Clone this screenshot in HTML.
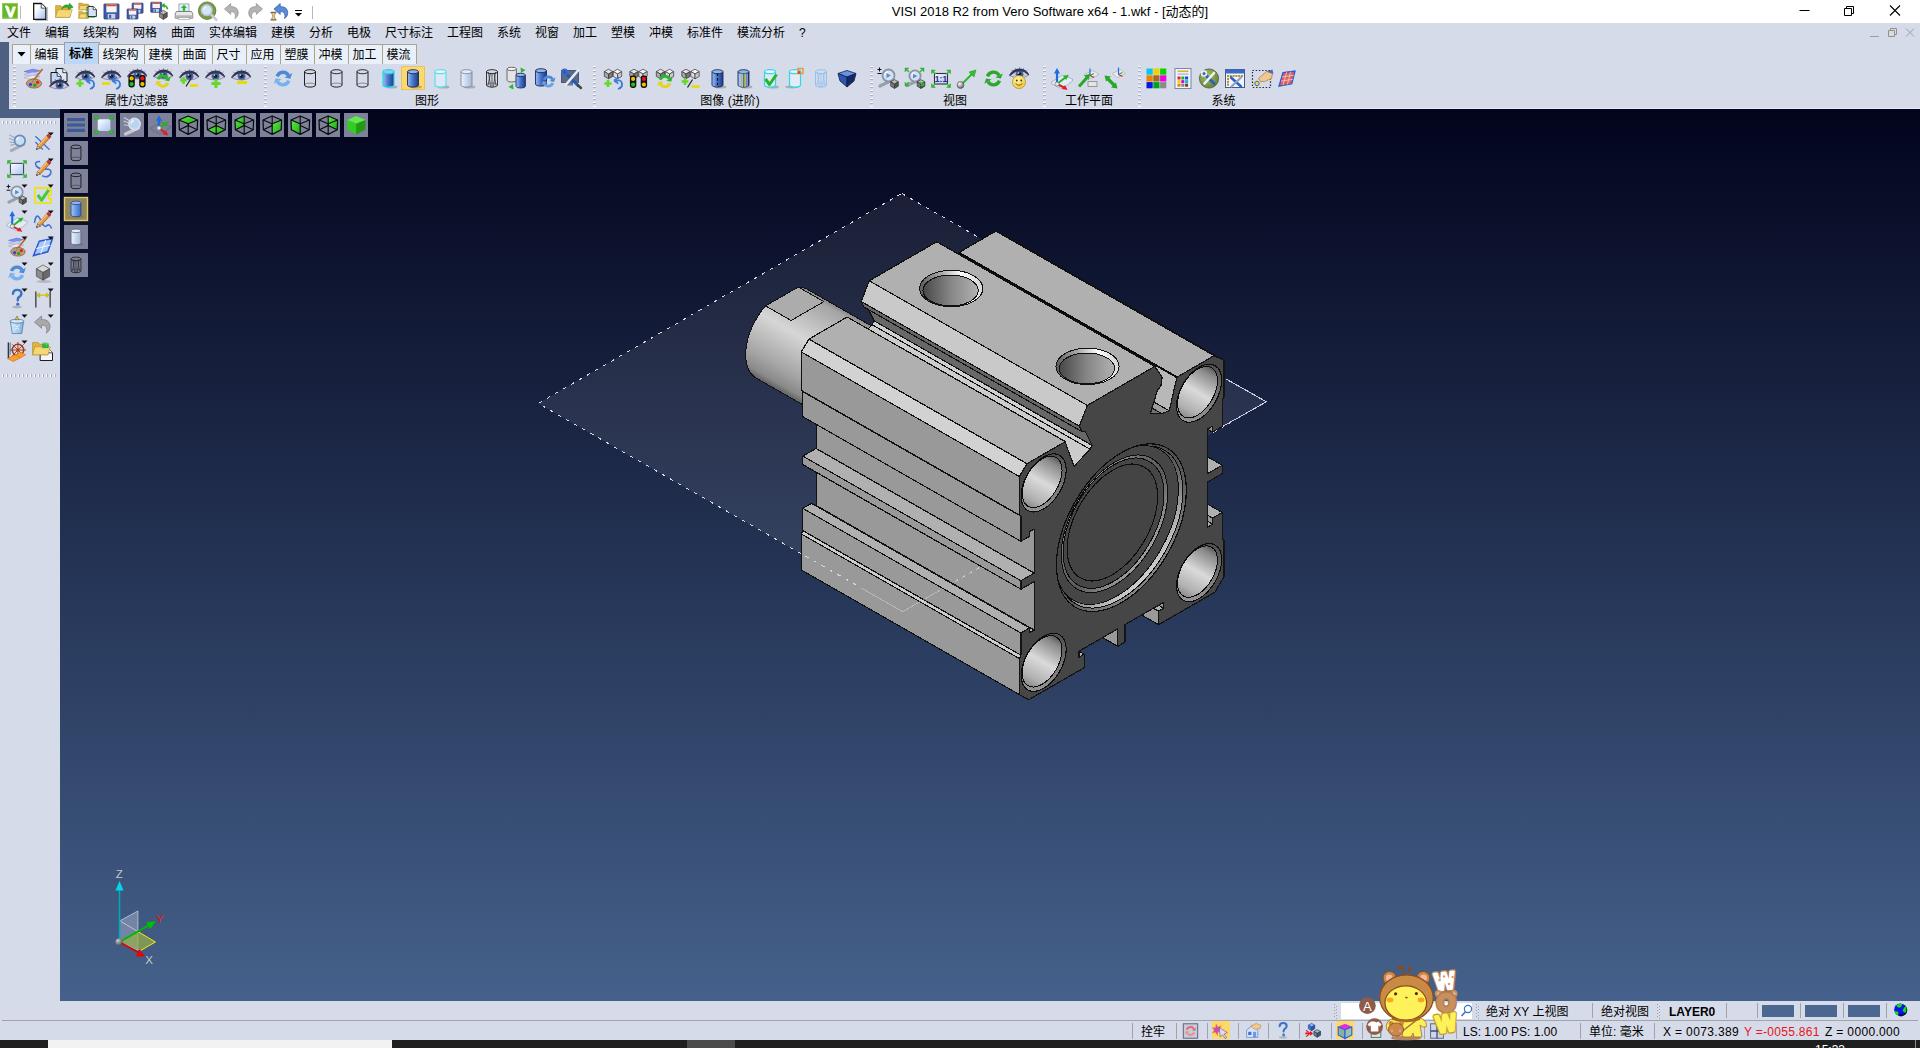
<!DOCTYPE html><html lang="zh"><head><meta charset="utf-8"><title>VISI 2018 R2</title><style>
html,body{margin:0;padding:0}
body{width:1920px;height:1048px;overflow:hidden;position:relative;background:#d6dbe9;font-family:"Liberation Sans","Noto Sans CJK SC",sans-serif;font-size:12px;color:#000;line-height:1}
.abs{position:absolute}
#title{left:0;top:0;width:1920px;height:23px;background:#fff}
#ttext{left:880px;top:4px;width:340px;height:16px;font-size:13px;line-height:16px;white-space:nowrap;text-align:center;color:#000}
.mi{position:absolute;top:26px;height:14px;line-height:14px;font-size:12px;white-space:nowrap;color:#000}
.tab{position:absolute;top:44px;height:20px;box-sizing:border-box;padding-right:2px;background:#e9f0fa;border:1px solid #aaa38d;border-bottom:none;font-size:12px;line-height:20px;text-align:center;white-space:nowrap;color:#000}
.tab.on{top:42px;height:22px;background:#bcd8f6;border-color:#9aa0a8;line-height:22px}
.glabel{position:absolute;top:94px;height:14px;line-height:14px;font-size:12px;white-space:nowrap;transform:translateX(-50%);color:#000}
.grip{position:absolute;width:3px;top:66px;height:41px;background-image:repeating-linear-gradient(#fff 0 1px,#aab 1px 2px,transparent 2px 4px);opacity:.9}
.hgrip{position:absolute;height:3px;left:2px;width:56px;background-image:repeating-linear-gradient(90deg,#fff 0 1px,#aab 1px 2px,transparent 2px 4px)}
#vp{left:60px;top:109px;width:1860px;height:892px;background:linear-gradient(#02041c,#45618b)}
.st{position:absolute;height:14px;line-height:14px;font-size:12px;white-space:nowrap;color:#000}
.sep{position:absolute;width:1px;background:#a2a3a8}
svg{position:absolute;left:0;top:0;overflow:visible}
svg text{font-family:"Liberation Sans","Noto Sans CJK SC",sans-serif}

</style></head><body>
<div class="abs" id="title"></div>
<div class="abs" id="ttext">VISI 2018 R2 from Vero Software x64 - 1.wkf - [动态的]</div>
<div class="mi" style="left:7px">文件</div>
<div class="mi" style="left:45px">编辑</div>
<div class="mi" style="left:83px">线架构</div>
<div class="mi" style="left:133px">网格</div>
<div class="mi" style="left:171px">曲面</div>
<div class="mi" style="left:209px">实体编辑</div>
<div class="mi" style="left:271px">建模</div>
<div class="mi" style="left:309px">分析</div>
<div class="mi" style="left:347px">电极</div>
<div class="mi" style="left:385px">尺寸标注</div>
<div class="mi" style="left:447px">工程图</div>
<div class="mi" style="left:497px">系统</div>
<div class="mi" style="left:535px">视窗</div>
<div class="mi" style="left:573px">加工</div>
<div class="mi" style="left:611px">塑模</div>
<div class="mi" style="left:649px">冲模</div>
<div class="mi" style="left:687px">标准件</div>
<div class="mi" style="left:737px">模流分析</div>
<div class="mi" style="left:799px">?</div>
<div class="abs" style="left:0;top:42px;width:9px;height:76px;background:#4d6082"></div>
<div class="abs" style="left:0;top:109px;width:60px;height:9px;background:#4d6082"></div>
<div class="tab" style="left:12px;width:19px"></div>
<div class="tab" style="left:30px;width:35px">编辑</div>
<div class="tab on" style="left:64px;width:36px;font-weight:bold">标准</div>
<div class="tab" style="left:98px;width:47px">线架构</div>
<div class="tab" style="left:144px;width:35px">建模</div>
<div class="tab" style="left:178px;width:35px">曲面</div>
<div class="tab" style="left:212px;width:35px">尺寸</div>
<div class="tab" style="left:246px;width:35px">应用</div>
<div class="tab" style="left:280px;width:35px">塑膜</div>
<div class="tab" style="left:314px;width:35px">冲模</div>
<div class="tab" style="left:348px;width:35px">加工</div>
<div class="tab" style="left:382px;width:35px">模流</div>
<div class="abs" style="left:9px;top:64px;width:1911px;height:45px;background:#d6dbe9"></div>
<div class="grip" style="left:13px"></div>
<div class="grip" style="left:264px"></div>
<div class="grip" style="left:593px"></div>
<div class="grip" style="left:870px"></div>
<div class="grip" style="left:1043px"></div>
<div class="grip" style="left:1138px"></div>
<div class="glabel" style="left:136.5px">属性/过滤器</div>
<div class="glabel" style="left:427px">图形</div>
<div class="glabel" style="left:730px">图像 (进阶)</div>
<div class="glabel" style="left:955px">视图</div>
<div class="glabel" style="left:1089px">工作平面</div>
<div class="glabel" style="left:1223.5px">系统</div>
<div class="abs" style="left:401px;top:66px;width:24px;height:24px;box-sizing:border-box;background:#fdd86c;border:1px solid #e5c365"></div>
<div class="abs" style="left:9px;top:108px;width:1911px;height:1px;background:#e6eaf8"></div>
<div class="hgrip" style="top:121px"></div><div class="hgrip" style="top:374px"></div>
<div class="abs" id="vp"></div>
<div class="abs" style="left:2px;top:1020px;width:1916px;height:1px;background:#a2a4ac"></div>
<div class="abs" style="left:0;top:1040px;width:1920px;height:8px;background:#1f1f1f"></div>
<div class="abs" style="left:48px;top:1040px;width:344px;height:8px;background:#f2f2f2"></div>
<div class="abs" style="left:687px;top:1040px;width:48px;height:8px;background:#4b4b4b"></div>
<div class="abs" style="left:1915px;top:1040px;width:1px;height:8px;background:#8c8c8c"></div>
<div class="abs" style="left:1815px;top:1044px;width:40px;height:4px;overflow:hidden;color:#fff;font-size:12px;line-height:12px">15:33</div>
<div class="abs" style="left:1341px;top:1003px;width:131px;height:16px;background:#fff"></div>
<div class="abs" style="left:1334px;top:1004px;width:1px;height:14px;background-image:repeating-linear-gradient(#9ca2b4 0 1px,transparent 1px 3px)"></div>
<div class="abs" style="left:1336px;top:1005.5px;width:1px;height:13px;background-image:repeating-linear-gradient(#9ca2b4 0 1px,transparent 1px 3px)"></div>
<div class="abs" style="left:1476px;top:1004px;width:1px;height:14px;background-image:repeating-linear-gradient(#9ca2b4 0 1px,transparent 1px 3px)"></div>
<div class="abs" style="left:1478px;top:1005.5px;width:1px;height:13px;background-image:repeating-linear-gradient(#9ca2b4 0 1px,transparent 1px 3px)"></div>
<div class="abs" style="left:1657px;top:1004px;width:1px;height:14px;background-image:repeating-linear-gradient(#9ca2b4 0 1px,transparent 1px 3px)"></div>
<div class="abs" style="left:1659px;top:1005.5px;width:1px;height:13px;background-image:repeating-linear-gradient(#9ca2b4 0 1px,transparent 1px 3px)"></div>
<div class="st" style="left:1486px;top:1005px;">绝对 XY 上视图</div>
<div class="st" style="left:1601px;top:1005px;">绝对视图</div>
<div class="st" style="left:1669px;top:1005px;font-weight:bold">LAYER0</div>
<div class="sep" style="left:1592px;top:1003px;height:15px"></div>
<div class="sep" style="left:1726px;top:1003px;height:15px"></div>
<div class="sep" style="left:1757px;top:1003px;height:15px"></div>
<div class="sep" style="left:1800px;top:1003px;height:15px"></div>
<div class="sep" style="left:1843px;top:1003px;height:15px"></div>
<div class="sep" style="left:1886px;top:1003px;height:15px"></div>
<div class="abs" style="left:1762px;top:1005px;width:32px;height:12px;background:#4a6691"></div>
<div class="abs" style="left:1805px;top:1005px;width:32px;height:12px;background:#4a6691"></div>
<div class="abs" style="left:1848px;top:1005px;width:32px;height:12px;background:#4a6691"></div>
<div class="sep" style="left:1132px;top:1023px;height:16px"></div>
<div class="sep" style="left:1176px;top:1023px;height:16px"></div>
<div class="sep" style="left:1207px;top:1023px;height:16px"></div>
<div class="sep" style="left:1238px;top:1023px;height:16px"></div>
<div class="sep" style="left:1268px;top:1023px;height:16px"></div>
<div class="sep" style="left:1299px;top:1023px;height:16px"></div>
<div class="sep" style="left:1331px;top:1023px;height:16px"></div>
<div class="sep" style="left:1362px;top:1023px;height:16px"></div>
<div class="sep" style="left:1392px;top:1023px;height:16px"></div>
<div class="sep" style="left:1424px;top:1023px;height:16px"></div>
<div class="sep" style="left:1456px;top:1023px;height:16px"></div>
<div class="sep" style="left:1580px;top:1023px;height:16px"></div>
<div class="sep" style="left:1654px;top:1023px;height:16px"></div>
<div class="abs" style="left:1212px;top:1021px;width:18px;height:18px;background:#fdd86c"></div>
<div class="abs" style="left:1336px;top:1021px;width:18px;height:18px;background:#fdd86c"></div>
<div class="st" style="left:1141px;top:1025px;">拴牢</div>
<div class="st" style="left:1463px;top:1025px;">LS: 1.00 PS: 1.00</div>
<div class="st" style="left:1589px;top:1025px;">单位: 毫米</div>
<div class="st" style="left:1663px;top:1025px;letter-spacing:.36px">X = 0073.389</div>
<div class="st" style="left:1744px;top:1025px;color:#e8141c;letter-spacing:.3px">Y =-0055.861</div>
<div class="st" style="left:1825px;top:1025px;letter-spacing:.34px">Z = 0000.000</div>
<svg width="1920" height="1048" viewBox="0 0 1920 1048">
<defs><linearGradient id="gPage" x1="0" y1="0" x2="1" y2="1"><stop offset="0" stop-color="#fff"/><stop offset=".3" stop-color="#fdfdff"/><stop offset="1" stop-color="#9cb8f4"/></linearGradient><linearGradient id="gCylB" x1="0" y1="0" x2="1" y2="0"><stop offset="0" stop-color="#9cc0f4"/><stop offset=".45" stop-color="#4a78cc"/><stop offset="1" stop-color="#1c3a86"/></linearGradient><linearGradient id="gCylL" x1="0" y1="0" x2="1" y2="0"><stop offset="0" stop-color="#a4c8fa"/><stop offset=".45" stop-color="#6a9cec"/><stop offset="1" stop-color="#3e68c0"/></linearGradient><linearGradient id="gCylP" x1="0" y1="0" x2="1" y2="0"><stop offset="0" stop-color="#eef4fc"/><stop offset=".5" stop-color="#c8d6ee"/><stop offset="1" stop-color="#a8b8d8"/></linearGradient><linearGradient id="gFrame" x1="0" y1="0" x2="1" y2="1"><stop offset="0" stop-color="#fff"/><stop offset="1" stop-color="#a8c4f0"/></linearGradient><linearGradient id="gTrash" x1="0" y1="0" x2="1" y2="0"><stop offset="0" stop-color="#d8ecfc"/><stop offset="1" stop-color="#7ab0dc"/></linearGradient><linearGradient id="gGrn" x1="0" y1="0" x2="1" y2="1"><stop offset="0" stop-color="#5cec46"/><stop offset="1" stop-color="#1fae14"/></linearGradient><radialGradient id="gBall" cx=".35" cy=".3" r=".8"><stop offset="0" stop-color="#fff"/><stop offset="1" stop-color="#555"/></radialGradient><radialGradient id="gSmile" cx=".4" cy=".35" r=".8"><stop offset="0" stop-color="#fff8a0"/><stop offset="1" stop-color="#f0b820"/></radialGradient><radialGradient id="gGreenBall" cx=".4" cy=".35" r=".8"><stop offset="0" stop-color="#a8c070"/><stop offset="1" stop-color="#5a7830"/></radialGradient><radialGradient id="gSph" cx=".35" cy=".3" r=".8"><stop offset="0" stop-color="#ccc"/><stop offset="1" stop-color="#444"/></radialGradient></defs>
<path d="M1799.5 10.5 H1809.5" stroke="#000" stroke-width="1"/>
<path d="M1844.5 8.5 h7 v7 h-7 Z M1846.5 8.5 v-2 h7 v7 h-2" fill="none" stroke="#000" stroke-width="1"/>
<path d="M1890 5.5 l10 10 M1900 5.5 l-10 10" stroke="#000" stroke-width="1.1"/>
<path d="M1870 36.5 h9" stroke="#9a9fb0" stroke-width="1"/><path d="M1888.5 30.5 h6 v6 h-6 Z M1890.5 30.5 v-2 h6 v6 h-2" fill="none" stroke="#9a9080" stroke-width="1"/><path d="M1906 28.5 l8 8 M1914 28.5 l-8 8" stroke="#9a9fa8" stroke-width="1"/>
<rect x="2" y="3" width="16" height="15.6" fill="#6ab62a"/><rect x="2.5" y="3.5" width="15" height="14.6" fill="none" stroke="#8cd050" stroke-width="1"/><text x="10.6" y="16.6" font-size="14.5" font-weight="bold" fill="#fff" stroke="#fff" stroke-width=".9" stroke-linejoin="round" text-anchor="middle">V</text><circle cx="6.4" cy="6.6" r="1.25" fill="#fff"/>
<path d="M20.5 6 V19" stroke="#b8b8b8"/><path d="M312.5 6 V19" stroke="#b8b8b8"/>
<g transform="translate(29.9,1.4) scale(0.84)"><path d="M6 22.6 h15 v-16" stroke="#999" stroke-width="1.2" fill="none" opacity=".6"/><path d="M4.5 2.5 h8.99 l5.51 5.51 v13.49 h-14.5 Z" fill="url(#gPage)" stroke="#111" stroke-width="1.5"/><path d="M13.49 2.5 v5.51 h5.51" fill="#fff" stroke="#111" stroke-width=".8"/></g>
<g transform="translate(53.9,1.4) scale(0.84)"><path d="M2 5 h6.3 l1.8 2.1 h9.0 v11.9 h-17.099999999999998 Z" fill="#e2b23c" stroke="#a88a2a" stroke-width=".6"/><path d="M2 19 l2.6999999999999997 -9.1 h17.099999999999998 l-2.6999999999999997 9.1 Z" fill="#f6d774" stroke="#a88a2a" stroke-width=".6"/><path d="M9 9 Q12 2.5 18 4.5 L18.5 2 L23 7 L17 9.5 L17.5 7 Q13 5.5 9 9Z" fill="#2cb02c" stroke="#187818" stroke-width=".5"/></g>
<g transform="translate(77.9,1.4) scale(0.84)"><path d="M1 2 h4.199999999999999 l1.2000000000000002 1.2 h6.0 v6.8 h-11.399999999999999 Z" fill="#e2b23c" stroke="#a88a2a" stroke-width=".6"/><path d="M1 10 l1.7999999999999998 -5.2 h11.399999999999999 l-1.7999999999999998 5.2 Z" fill="#f6d774" stroke="#a88a2a" stroke-width=".6"/><path d="M1 12 h4.199999999999999 l1.2000000000000002 1.2 h6.0 v6.8 h-11.399999999999999 Z" fill="#e2b23c" stroke="#a88a2a" stroke-width=".6"/><path d="M1 20 l1.7999999999999998 -5.2 h11.399999999999999 l-1.7999999999999998 5.2 Z" fill="#f6d774" stroke="#a88a2a" stroke-width=".6"/><rect x="10" y="7" width="10" height="12" fill="none" stroke="#40b040" stroke-width=".8"/><path d="M12 6 h6.2 l3.8 3.8 v8.2 h-10 Z" fill="#d4e2f8" stroke="#111" stroke-width="1"/><path d="M18.2 6 v3.8 h3.8" fill="#fff" stroke="#111" stroke-width=".8"/></g>
<g transform="translate(101.4,1.4) scale(0.84)"><rect x="3" y="3" width="18" height="18" rx=".8" fill="#3e5aa8" stroke="#22356c" stroke-width=".8"/><rect x="5.88" y="3.6" width="12.24" height="9.36" fill="#f4f4f4"/><rect x="5.88" y="3.6" width="12.24" height="2.16" fill="#e04a3a"/><rect x="7.5" y="14.88" width="9.0" height="5.62" fill="#c9d2e4"/><rect x="9.120000000000001" y="15.959999999999999" width="2.5200000000000005" height="3.96" fill="#3e5aa8"/></g>
<g transform="translate(125.4,1.4) scale(0.84)"><rect x="8" y="2" width="13" height="12" rx=".8" fill="#3e5aa8" stroke="#22356c" stroke-width=".8"/><rect x="10.08" y="2.6" width="8.84" height="6.24" fill="#f4f4f4"/><rect x="10.08" y="2.6" width="8.84" height="1.44" fill="#e04a3a"/><rect x="11.25" y="9.92" width="6.5" height="3.58" fill="#c9d2e4"/><rect x="12.42" y="10.64" width="1.8200000000000003" height="2.64" fill="#3e5aa8"/><rect x="2" y="9" width="13" height="12" rx=".8" fill="#3e5aa8" stroke="#22356c" stroke-width=".8"/><rect x="4.08" y="9.6" width="8.84" height="6.24" fill="#f4f4f4"/><rect x="4.08" y="9.6" width="8.84" height="1.44" fill="#e04a3a"/><rect x="5.25" y="16.92" width="6.5" height="3.58" fill="#c9d2e4"/><rect x="6.42" y="17.64" width="1.8200000000000003" height="2.64" fill="#3e5aa8"/></g>
<g transform="translate(149.9,1.4) scale(0.84)"><rect x="1" y="1" width="13" height="12" rx=".8" fill="#3e5aa8" stroke="#22356c" stroke-width=".8"/><rect x="3.08" y="1.6" width="8.84" height="6.24" fill="#f4f4f4"/><rect x="3.08" y="1.6" width="8.84" height="1.44" fill="#e04a3a"/><rect x="4.25" y="8.92" width="6.5" height="3.58" fill="#c9d2e4"/><rect x="5.42" y="9.64" width="1.8200000000000003" height="2.64" fill="#3e5aa8"/><path d="M16 10.6 l4.698 2.7 l-4.698 2.7 l-4.698 -2.7 Z" fill="#b8b8b8" stroke="#333" stroke-width="0.7"/><path d="M11.302 13.3 l4.698 2.7 v5.4 l-4.698 -2.7 Z" fill="#8a8a8a" stroke="#333" stroke-width="0.7"/><path d="M20.698 13.3 l-4.698 2.7 v5.4 l4.698 -2.7 Z" fill="#5a5a5a" stroke="#333" stroke-width="0.7"/><path d="M15 5 Q20 4 21 9.5" stroke="#2cb02c" stroke-width="2" fill="none"/><path d="M13 5 l4.5 -3 v6 Z" fill="#2cb02c"/></g>
<g transform="translate(173.9,1.4) scale(0.84)"><rect x="6" y="3" width="12" height="9" fill="#e4ecf8" stroke="#7a86a0" stroke-width=".8"/><path d="M12 4 l-3.6 4 h2.2 v3 h2.8 v-3 h2.2 Z" fill="#28b828"/><path d="M3 12 h18 l1.5 3 v5 h-21 v-5 Z" fill="#e8e8e8" stroke="#555" stroke-width=".8"/><rect x="2" y="16.5" width="20" height="3.5" fill="#b8b8b8"/><rect x="5" y="19" width="14" height="2.5" fill="#fafafa" stroke="#666" stroke-width=".5"/></g>
<g transform="translate(197.9,1.4) scale(0.84)"><circle cx="11" cy="11" r="10.4" fill="#7a9a4a"/><circle cx="11" cy="11" r="10.4" fill="none" stroke="#5c7a34" stroke-width="1"/><path d="M15.02544 15.02544 L22 22" stroke="#c8ccd4" stroke-width="3.2" stroke-linecap="round"/><circle cx="10.5" cy="10.5" r="6.4" fill="#d4e6f6" stroke="#b8c4d2" stroke-width="1.8"/><path d="M6.66 9.86 a3.84 3.84 0 0 1 3.2 -3.2" stroke="#fff" stroke-width="1.2" fill="none" opacity=".9"/></g>
<g transform="translate(221.9,1.4) scale(0.84)"><path d="M3 9 L10.5 2.5 V6.2 Q19.5 6 19.5 14 Q19.5 18 15.5 20.5 Q17 17.5 15.5 14.5 Q14 11.8 10.5 12 V15.5 Z" fill="#b4b4b4" stroke="#8c8c8c" stroke-width=".8" stroke-linejoin="round"/></g>
<g transform="translate(244.9,1.4) scale(0.84)"><g transform="translate(24,0) scale(-1,1)"><path d="M3 9 L10.5 2.5 V6.2 Q19.5 6 19.5 14 Q19.5 18 15.5 20.5 Q17 17.5 15.5 14.5 Q14 11.8 10.5 12 V15.5 Z" fill="#b4b4b4" stroke="#8c8c8c" stroke-width=".8" stroke-linejoin="round"/></g></g>
<g transform="translate(268.9,1.4) scale(0.84)"><g transform="translate(3,0)"><path d="M3 9 L10.5 2.5 V6.2 Q19.5 6 19.5 14 Q19.5 18 15.5 20.5 Q17 17.5 15.5 14.5 Q14 11.8 10.5 12 V15.5 Z" fill="#5a8ad8" stroke="#2a5aa8" stroke-width=".8" stroke-linejoin="round"/></g><path d="M2 13 h7 M2 22 h7" stroke="#7a5a20" stroke-width="1.6"/><path d="M3 13.5 h5 l-1.8 4 l1.8 4 h-5 l1.8 -4 Z" fill="#e8d8a0" stroke="#7a5a20" stroke-width=".7"/></g>
<path d="M295 10.5 h7" stroke="#000" stroke-width="1"/><path d="M295 13 h7 l-3.5 3.5 Z" fill="#000"/>
<path d="M17.5 52 h8 l-4 4.5 Z" fill="#000"/>
<g transform="translate(21.0,66.5) scale(1.0)"><path d="M3 5 l9 -2.4 l7 1.6 l-9 2.6Z" fill="#7f8ef0" stroke="#4a56b8" stroke-width=".4"/><path d="M3 8 l9 -2.4 l7 1.6 l-9 2.6Z" fill="#c8d0f8" stroke="#8890c8" stroke-width=".4"/><path d="M3 11 l9 -2.4 l7 1.6 l-9 2.6Z" fill="#e8e8ea" stroke="#888" stroke-width=".4"/><ellipse cx="13" cy="17" rx="7.6" ry="4.6" fill="#c89870" stroke="#7a5030" stroke-width=".7"/><circle cx="9.5" cy="18" r="1.7" fill="#1c50e0"/><circle cx="13.8" cy="18.8" r="1.7" fill="#18a828"/><circle cx="16.6" cy="15.8" r="1.6" fill="#d82020"/><path d="M12 14.5 L21.5 2.5" stroke="#b06a28" stroke-width="1.6"/><path d="M11 16 l2.4 -3 l1.2 1 Z" fill="#ddd" stroke="#555" stroke-width=".4"/></g>
<g transform="translate(47.0,66.5) scale(1.0)"><path d="M9 2 h6.82 l4.18 4.18 v8.82 h-11 Z" fill="#dce8fa" stroke="#111" stroke-width="1"/><path d="M15.82 2 v4.18 h4.18" fill="#fff" stroke="#111" stroke-width=".8"/><path d="M4 6 h6.2 l3.8 3.8 v7.2 h-10 Z" fill="#c4d6f4" stroke="#111" stroke-width="1"/><path d="M10.2 6 v3.8 h3.8" fill="#fff" stroke="#111" stroke-width=".8"/><g transform="translate(0,9) translate(0,1.2) translate(12,8) scale(.96,.9) translate(-12,-8)"><path d="M1.5 10 Q6 2 13 2.2 Q19.5 2.6 22.8 9.4 Q18 5.8 12.5 6 Q6.5 6.2 1.5 10Z" fill="#2e3656"/><path d="M5 4.8 l-1 -1.2 M8.5 3.2 l-.5 -1.3 M12.5 2.4 v-1.3 M16.5 3 l.6 -1.2 M19.8 4.8 l1 -1" stroke="#3a4266" stroke-width=".7"/><path d="M2.2 10.2 Q7.5 4.4 13 4.6 Q18.6 4.8 22.2 9.4 Q18.4 12.6 12.6 12.8 Q6.6 12.8 2.2 10.2Z" fill="#cfc8d8" stroke="#5a6288" stroke-width=".6"/><circle cx="12.6" cy="8.5" r="4.1" fill="#4c6aa2"/><circle cx="12.6" cy="8.5" r="2.9" fill="#3a5488"/><circle cx="12.6" cy="8.5" r="1.7" fill="#141a30"/><circle cx="11.4" cy="7.2" r=".9" fill="#e8f0fc"/><path d="M2.2 10.2 Q7.5 4.4 13 4.6 Q18.6 4.8 22.2 9.4" fill="none" stroke="#2e3656" stroke-width="1.2"/></g></g>
<g transform="translate(73.0,66.5) scale(1.0)"><g transform="translate(0,0) translate(0,1.2) translate(12,8) scale(.96,.9) translate(-12,-8)"><path d="M1.5 10 Q6 2 13 2.2 Q19.5 2.6 22.8 9.4 Q18 5.8 12.5 6 Q6.5 6.2 1.5 10Z" fill="#2e3656"/><path d="M5 4.8 l-1 -1.2 M8.5 3.2 l-.5 -1.3 M12.5 2.4 v-1.3 M16.5 3 l.6 -1.2 M19.8 4.8 l1 -1" stroke="#3a4266" stroke-width=".7"/><path d="M2.2 10.2 Q7.5 4.4 13 4.6 Q18.6 4.8 22.2 9.4 Q18.4 12.6 12.6 12.8 Q6.6 12.8 2.2 10.2Z" fill="#cfc8d8" stroke="#5a6288" stroke-width=".6"/><circle cx="12.6" cy="8.5" r="4.1" fill="#4c6aa2"/><circle cx="12.6" cy="8.5" r="2.9" fill="#3a5488"/><circle cx="12.6" cy="8.5" r="1.7" fill="#141a30"/><circle cx="11.4" cy="7.2" r=".9" fill="#e8f0fc"/><path d="M2.2 10.2 Q7.5 4.4 13 4.6 Q18.6 4.8 22.2 9.4" fill="none" stroke="#2e3656" stroke-width="1.2"/></g><path d="M3.4 17H10.6M7 13.4V20.6" stroke="#66d82a" stroke-width="2.6" fill="none"/><g transform="translate(13,14)"><path d="M0 0 L6 -1.5 M0 0 L3 4.5" stroke="#3c78d8" stroke-width="1.6" fill="none" transform="rotate(-20)"/><path d="M1 1 Q7 -2 8 3 Q8.5 7 4 8.5" stroke="#3c78d8" stroke-width="1.8" fill="none"/></g></g>
<g transform="translate(99.0,66.5) scale(1.0)"><g transform="translate(0,0) translate(0,1.2) translate(12,8) scale(.96,.9) translate(-12,-8)"><path d="M1.5 10 Q6 2 13 2.2 Q19.5 2.6 22.8 9.4 Q18 5.8 12.5 6 Q6.5 6.2 1.5 10Z" fill="#2e3656"/><path d="M5 4.8 l-1 -1.2 M8.5 3.2 l-.5 -1.3 M12.5 2.4 v-1.3 M16.5 3 l.6 -1.2 M19.8 4.8 l1 -1" stroke="#3a4266" stroke-width=".7"/><path d="M2.2 10.2 Q7.5 4.4 13 4.6 Q18.6 4.8 22.2 9.4 Q18.4 12.6 12.6 12.8 Q6.6 12.8 2.2 10.2Z" fill="#cfc8d8" stroke="#5a6288" stroke-width=".6"/><circle cx="12.6" cy="8.5" r="4.1" fill="#4c6aa2"/><circle cx="12.6" cy="8.5" r="2.9" fill="#3a5488"/><circle cx="12.6" cy="8.5" r="1.7" fill="#141a30"/><circle cx="11.4" cy="7.2" r=".9" fill="#e8f0fc"/><path d="M2.2 10.2 Q7.5 4.4 13 4.6 Q18.6 4.8 22.2 9.4" fill="none" stroke="#2e3656" stroke-width="1.2"/></g><path d="M3 17H11" stroke="#e6dc00" stroke-width="2.6" fill="none"/><g transform="translate(13,14)"><path d="M0 0 L6 -1.5 M0 0 L3 4.5" stroke="#3c78d8" stroke-width="1.6" fill="none" transform="rotate(-20)"/><path d="M1 1 Q7 -2 8 3 Q8.5 7 4 8.5" stroke="#3c78d8" stroke-width="1.8" fill="none"/></g></g>
<g transform="translate(125.0,66.5) scale(1.0)"><g transform="translate(0,-1) translate(0,1.2) translate(12,8) scale(.96,.9) translate(-12,-8)"><path d="M1.5 10 Q6 2 13 2.2 Q19.5 2.6 22.8 9.4 Q18 5.8 12.5 6 Q6.5 6.2 1.5 10Z" fill="#2e3656"/><path d="M5 4.8 l-1 -1.2 M8.5 3.2 l-.5 -1.3 M12.5 2.4 v-1.3 M16.5 3 l.6 -1.2 M19.8 4.8 l1 -1" stroke="#3a4266" stroke-width=".7"/><path d="M2.2 10.2 Q7.5 4.4 13 4.6 Q18.6 4.8 22.2 9.4 Q18.4 12.6 12.6 12.8 Q6.6 12.8 2.2 10.2Z" fill="#cfc8d8" stroke="#5a6288" stroke-width=".6"/><circle cx="12.6" cy="8.5" r="4.1" fill="#4c6aa2"/><circle cx="12.6" cy="8.5" r="2.9" fill="#3a5488"/><circle cx="12.6" cy="8.5" r="1.7" fill="#141a30"/><circle cx="11.4" cy="7.2" r=".9" fill="#e8f0fc"/><path d="M2.2 10.2 Q7.5 4.4 13 4.6 Q18.6 4.8 22.2 9.4" fill="none" stroke="#2e3656" stroke-width="1.2"/></g><rect x="3.4" y="8.5" width="6.4" height="12.5" rx="2.4" fill="#111"/><circle cx="6.6" cy="11.9" r="2.1" fill="#f0c000"/><circle cx="6.6" cy="17.6" r="2.1" fill="#18c818"/><rect x="14.2" y="8.5" width="6.4" height="12.5" rx="2.4" fill="#111"/><circle cx="17.4" cy="11.9" r="2.1" fill="#e01818"/><circle cx="17.4" cy="17.6" r="2.1" fill="#f0c000"/></g>
<g transform="translate(151.0,66.5) scale(1.0)"><g transform="translate(0,-1) translate(0,1.2) translate(12,8) scale(.96,.9) translate(-12,-8)"><path d="M1.5 10 Q6 2 13 2.2 Q19.5 2.6 22.8 9.4 Q18 5.8 12.5 6 Q6.5 6.2 1.5 10Z" fill="#2e3656"/><path d="M5 4.8 l-1 -1.2 M8.5 3.2 l-.5 -1.3 M12.5 2.4 v-1.3 M16.5 3 l.6 -1.2 M19.8 4.8 l1 -1" stroke="#3a4266" stroke-width=".7"/><path d="M2.2 10.2 Q7.5 4.4 13 4.6 Q18.6 4.8 22.2 9.4 Q18.4 12.6 12.6 12.8 Q6.6 12.8 2.2 10.2Z" fill="#cfc8d8" stroke="#5a6288" stroke-width=".6"/><circle cx="12.6" cy="8.5" r="4.1" fill="#4c6aa2"/><circle cx="12.6" cy="8.5" r="2.9" fill="#3a5488"/><circle cx="12.6" cy="8.5" r="1.7" fill="#141a30"/><circle cx="11.4" cy="7.2" r=".9" fill="#e8f0fc"/><path d="M2.2 10.2 Q7.5 4.4 13 4.6 Q18.6 4.8 22.2 9.4" fill="none" stroke="#2e3656" stroke-width="1.2"/></g><path d="M7.1 12.7 A5.2 5.2 0 0 1 16.5 11.9" stroke="#2fb62f" stroke-width="3" fill="none"/><path d="M19.8 10.0 L13.3 13.8 L18.2 14.8 Z" fill="#2fb62f"/><path d="M16.9 16.3 A5.2 5.2 0 0 1 7.5 17.1" stroke="#e4d420" stroke-width="3" fill="none"/><path d="M4.2 19.0 L10.7 15.2 L5.8 14.2 Z" fill="#e4d420"/></g>
<g transform="translate(177.0,66.5) scale(1.0)"><g transform="translate(0,0) translate(0,1.2) translate(12,8) scale(.96,.9) translate(-12,-8)"><path d="M1.5 10 Q6 2 13 2.2 Q19.5 2.6 22.8 9.4 Q18 5.8 12.5 6 Q6.5 6.2 1.5 10Z" fill="#2e3656"/><path d="M5 4.8 l-1 -1.2 M8.5 3.2 l-.5 -1.3 M12.5 2.4 v-1.3 M16.5 3 l.6 -1.2 M19.8 4.8 l1 -1" stroke="#3a4266" stroke-width=".7"/><path d="M2.2 10.2 Q7.5 4.4 13 4.6 Q18.6 4.8 22.2 9.4 Q18.4 12.6 12.6 12.8 Q6.6 12.8 2.2 10.2Z" fill="#cfc8d8" stroke="#5a6288" stroke-width=".6"/><circle cx="12.6" cy="8.5" r="4.1" fill="#4c6aa2"/><circle cx="12.6" cy="8.5" r="2.9" fill="#3a5488"/><circle cx="12.6" cy="8.5" r="1.7" fill="#141a30"/><circle cx="11.4" cy="7.2" r=".9" fill="#e8f0fc"/><path d="M2.2 10.2 Q7.5 4.4 13 4.6 Q18.6 4.8 22.2 9.4" fill="none" stroke="#2e3656" stroke-width="1.2"/></g><path d="M3.1 14H9.9M6.5 10.6V17.4" stroke="#66d82a" stroke-width="2.6" fill="none"/><path d="M9 20 L14 12" stroke="#222" stroke-width="1.2"/><path d="M13 19H21" stroke="#e6dc00" stroke-width="2.6" fill="none"/></g>
<g transform="translate(203.0,66.5) scale(1.0)"><g transform="translate(0,0) translate(0,1.2) translate(12,8) scale(.96,.9) translate(-12,-8)"><path d="M1.5 10 Q6 2 13 2.2 Q19.5 2.6 22.8 9.4 Q18 5.8 12.5 6 Q6.5 6.2 1.5 10Z" fill="#2e3656"/><path d="M5 4.8 l-1 -1.2 M8.5 3.2 l-.5 -1.3 M12.5 2.4 v-1.3 M16.5 3 l.6 -1.2 M19.8 4.8 l1 -1" stroke="#3a4266" stroke-width=".7"/><path d="M2.2 10.2 Q7.5 4.4 13 4.6 Q18.6 4.8 22.2 9.4 Q18.4 12.6 12.6 12.8 Q6.6 12.8 2.2 10.2Z" fill="#cfc8d8" stroke="#5a6288" stroke-width=".6"/><circle cx="12.6" cy="8.5" r="4.1" fill="#4c6aa2"/><circle cx="12.6" cy="8.5" r="2.9" fill="#3a5488"/><circle cx="12.6" cy="8.5" r="1.7" fill="#141a30"/><circle cx="11.4" cy="7.2" r=".9" fill="#e8f0fc"/><path d="M2.2 10.2 Q7.5 4.4 13 4.6 Q18.6 4.8 22.2 9.4" fill="none" stroke="#2e3656" stroke-width="1.2"/></g><path d="M8.4 17H17.6M13 12.4V21.6" stroke="#66d82a" stroke-width="3" fill="none"/></g>
<g transform="translate(229.0,66.5) scale(1.0)"><g transform="translate(0,0) translate(0,1.2) translate(12,8) scale(.96,.9) translate(-12,-8)"><path d="M1.5 10 Q6 2 13 2.2 Q19.5 2.6 22.8 9.4 Q18 5.8 12.5 6 Q6.5 6.2 1.5 10Z" fill="#2e3656"/><path d="M5 4.8 l-1 -1.2 M8.5 3.2 l-.5 -1.3 M12.5 2.4 v-1.3 M16.5 3 l.6 -1.2 M19.8 4.8 l1 -1" stroke="#3a4266" stroke-width=".7"/><path d="M2.2 10.2 Q7.5 4.4 13 4.6 Q18.6 4.8 22.2 9.4 Q18.4 12.6 12.6 12.8 Q6.6 12.8 2.2 10.2Z" fill="#cfc8d8" stroke="#5a6288" stroke-width=".6"/><circle cx="12.6" cy="8.5" r="4.1" fill="#4c6aa2"/><circle cx="12.6" cy="8.5" r="2.9" fill="#3a5488"/><circle cx="12.6" cy="8.5" r="1.7" fill="#141a30"/><circle cx="11.4" cy="7.2" r=".9" fill="#e8f0fc"/><path d="M2.2 10.2 Q7.5 4.4 13 4.6 Q18.6 4.8 22.2 9.4" fill="none" stroke="#2e3656" stroke-width="1.2"/></g><path d="M8 16H18" stroke="#e6dc00" stroke-width="3" fill="none"/></g>
<g transform="translate(271.0,66.5) scale(1.0)"><path d="M6.2 9.9 A6.2 6.2 0 0 1 17.4 8.9" stroke="#4a8ad8" stroke-width="3.6" fill="none"/><path d="M21.3 6.6 L13.5 11.1 L19.3 12.3 Z" fill="#4a8ad8"/><path d="M17.8 14.1 A6.2 6.2 0 0 1 6.6 15.1" stroke="#7ab0ec" stroke-width="3.6" fill="none"/><path d="M2.7 17.4 L10.5 12.8 L4.7 11.7 Z" fill="#7ab0ec"/></g>
<g transform="translate(298.0,66.5) scale(1.0)"><path d="M6.5 5.2 V18.6 A5.5 2 0 0 0 17.5 18.6 V5.2 Z" fill="none" stroke="none"/><path d="M6.5 5.2 V18.6 A5.5 2 0 0 0 17.5 18.6 V5.2" fill="none" stroke="#222" stroke-width="1"/><path d="M6.5 18.6 A5.5 2 0 0 1 17.5 18.6" fill="none" stroke="#222" stroke-width="0.8" opacity=".55"/><ellipse cx="12" cy="5.2" rx="5.5" ry="2" fill="none" stroke="#222" stroke-width="1"/></g>
<g transform="translate(324.5,66.5) scale(1.0)"><path d="M6.5 5.2 V18.6 A5.5 2 0 0 0 17.5 18.6 V5.2 Z" fill="none" stroke="none"/><path d="M6.5 5.2 V18.6 A5.5 2 0 0 0 17.5 18.6 V5.2" fill="none" stroke="#222" stroke-width="1"/><path d="M6.5 18.6 A5.5 2 0 0 1 17.5 18.6" fill="none" stroke="#222" stroke-width="0.8" opacity=".55"/><ellipse cx="12" cy="5.2" rx="5.5" ry="2" fill="none" stroke="#222" stroke-width="1"/></g>
<g transform="translate(350.5,66.5) scale(1.0)"><path d="M6.5 5.2 V18.6 A5.5 2 0 0 0 17.5 18.6 V5.2 Z" fill="none" stroke="none"/><path d="M6.5 5.2 V18.6 A5.5 2 0 0 0 17.5 18.6 V5.2" fill="none" stroke="#222" stroke-width="1"/><path d="M6.5 18.6 A5.5 2 0 0 1 17.5 18.6" fill="none" stroke="#222" stroke-width="0.8" opacity=".55"/><ellipse cx="12" cy="5.2" rx="5.5" ry="2" fill="none" stroke="#222" stroke-width="1"/></g>
<g transform="translate(376.5,66.5) scale(1.0)"><ellipse cx="15" cy="20.5" rx="6" ry="1.6" fill="#555" opacity=".35"/><path d="M6.5 5.2 V18.6 A5.5 2 0 0 0 17.5 18.6 V5.2 Z" fill="url(#gCylB)" stroke="none"/><path d="M6.5 5.2 V18.6 A5.5 2 0 0 0 17.5 18.6 V5.2" fill="none" stroke="#22d8e8" stroke-width="1.2"/><ellipse cx="12" cy="5.2" rx="5.5" ry="2" fill="#9ec4f4" stroke="#22d8e8" stroke-width="1.2"/></g>
<g transform="translate(401.0,66.5) scale(1.0)"><ellipse cx="15" cy="20.5" rx="6" ry="1.6" fill="#555" opacity=".35"/><path d="M6.5 5.2 V18.6 A5.5 2 0 0 0 17.5 18.6 V5.2 Z" fill="url(#gCylB)" stroke="none"/><path d="M6.5 5.2 V18.6 A5.5 2 0 0 0 17.5 18.6 V5.2" fill="none" stroke="#1a2a5a" stroke-width="0.9"/><ellipse cx="12" cy="5.2" rx="5.5" ry="2" fill="#8eb4ec" stroke="#1a2a5a" stroke-width="0.9"/></g>
<g transform="translate(428.5,66.5) scale(1.0)"><ellipse cx="15" cy="20.5" rx="6" ry="1.6" fill="#555" opacity=".35"/><path d="M6.5 5.2 V18.6 A5.5 2 0 0 0 17.5 18.6 V5.2 Z" fill="#dfe8f6" stroke="none"/><path d="M6.5 5.2 V18.6 A5.5 2 0 0 0 17.5 18.6 V5.2" fill="none" stroke="#5ae0ec" stroke-width="1.2"/><ellipse cx="12" cy="5.2" rx="5.5" ry="2" fill="#eef4fc" stroke="#5ae0ec" stroke-width="1.2"/></g>
<g transform="translate(454.5,66.5) scale(1.0)"><ellipse cx="15" cy="20.5" rx="6" ry="1.6" fill="#555" opacity=".35"/><path d="M6.5 5.2 V18.6 A5.5 2 0 0 0 17.5 18.6 V5.2 Z" fill="url(#gCylP)" stroke="none"/><path d="M6.5 5.2 V18.6 A5.5 2 0 0 0 17.5 18.6 V5.2" fill="none" stroke="#7a86a0" stroke-width="0.9"/><ellipse cx="12" cy="5.2" rx="5.5" ry="2" fill="#e4ecf8" stroke="#7a86a0" stroke-width="0.9"/></g>
<g transform="translate(480.0,66.5) scale(1.0)"><path d="M6.5 5.2 V18.6 A5.5 2 0 0 0 17.5 18.6 V5.2 Z" fill="none" stroke="none"/><path d="M6.5 5.2 V18.6 A5.5 2 0 0 0 17.5 18.6 V5.2" fill="none" stroke="#222" stroke-width="0.9"/><path d="M6.5 18.6 A5.5 2 0 0 1 17.5 18.6" fill="none" stroke="#222" stroke-width="0.7200000000000001" opacity=".55"/><ellipse cx="12" cy="5.2" rx="5.5" ry="2" fill="none" stroke="#222" stroke-width="0.9"/><path d="M8.5 5.5 L10.5 20 M10.5 6.3 L8 19 M12 6.5 V21 M14 6.3 L16 19 M15.5 5.5 L13.5 20" stroke="#222" stroke-width=".7" fill="none"/></g>
<g transform="translate(505.5,66.5) scale(1.0)"><g transform="translate(-4,-2) scale(.85)"><path d="M6.5 5.2 V18.6 A5.5 2 0 0 0 17.5 18.6 V5.2 Z" fill="#e4e4e4" stroke="none"/><path d="M6.5 5.2 V18.6 A5.5 2 0 0 0 17.5 18.6 V5.2" fill="none" stroke="#555" stroke-width="1"/><ellipse cx="12" cy="5.2" rx="5.5" ry="2" fill="#f4f4f4" stroke="#555" stroke-width="1"/></g><g transform="translate(5,4) scale(.85)"><path d="M6.5 5.2 V18.6 A5.5 2 0 0 0 17.5 18.6 V5.2 Z" fill="url(#gCylB)" stroke="none"/><path d="M6.5 5.2 V18.6 A5.5 2 0 0 0 17.5 18.6 V5.2" fill="none" stroke="#1a2a5a" stroke-width="1"/><ellipse cx="12" cy="5.2" rx="5.5" ry="2" fill="#8eb4ec" stroke="#1a2a5a" stroke-width="1"/></g><path d="M15 1 l5 2.5 l-4.5 3 Z" fill="#28b828"/><path d="M8 23 l-5 -2.5 l4.5 -3 Z" fill="#28b828"/></g>
<g transform="translate(532.0,66.5) scale(1.0)"><g transform="translate(-3,-1)"><path d="M6.5 5.2 V18.6 A5.5 2 0 0 0 17.5 18.6 V5.2 Z" fill="url(#gCylB)" stroke="none"/><path d="M6.5 5.2 V18.6 A5.5 2 0 0 0 17.5 18.6 V5.2" fill="none" stroke="#1a2a5a" stroke-width="0.9"/><ellipse cx="12" cy="5.2" rx="5.5" ry="2" fill="#8eb4ec" stroke="#1a2a5a" stroke-width="0.9"/></g><path d="M12.2 13.4 A4.6 4.6 0 0 1 20.5 12.7" stroke="#4a8ad8" stroke-width="2.8" fill="none"/><path d="M23.5 10.9 L17.5 14.4 L22.0 15.4 Z" fill="#4a8ad8"/><path d="M20.8 16.6 A4.6 4.6 0 0 1 12.5 17.3" stroke="#6aa0e4" stroke-width="2.8" fill="none"/><path d="M9.5 19.1 L15.5 15.6 L11.0 14.6 Z" fill="#6aa0e4"/></g>
<g transform="translate(559.0,66.5) scale(1.0)"><rect x="2.5" y="4" width="17" height="12" fill="#5a6a88" stroke="#39465e" stroke-width=".8"/><rect x="8" y="16" width="6" height="3" fill="#6a7892"/><path d="M5 5 L19 19" stroke="#2a5ab0" stroke-width="3" stroke-linecap="round"/><path d="M19 4 L7 18" stroke="#e8eef8" stroke-width="2.6" stroke-linecap="round"/><circle cx="5.6" cy="5.6" r="2.6" fill="none" stroke="#3a6ac8" stroke-width="1.8"/><path d="M19 19 l3 2.5" stroke="#444" stroke-width="2.4" stroke-linecap="round"/></g>
<g transform="translate(601.0,66.5) scale(1.0)"><path d="M7.5 2.7 l4.176 2.4 l-4.176 2.4 l-4.176 -2.4 Z" fill="#e6e6e6" stroke="#333" stroke-width="0.7"/><path d="M3.324 5.1 l4.176 2.4 v4.8 l-4.176 -2.4 Z" fill="#a8a8a8" stroke="#333" stroke-width="0.7"/><path d="M11.676 5.1 l-4.176 2.4 v4.8 l4.176 -2.4 Z" fill="#787878" stroke="#333" stroke-width="0.7"/><path d="M16.5 2.7 l4.176 2.4 l-4.176 2.4 l-4.176 -2.4 Z" fill="#f8f8f8" stroke="#333" stroke-width="0.7"/><path d="M12.324 5.1 l4.176 2.4 v4.8 l-4.176 -2.4 Z" fill="#e0e0e0" stroke="#333" stroke-width="0.7"/><path d="M20.676000000000002 5.1 l-4.176 2.4 v4.8 l4.176 -2.4 Z" fill="#c8c8c8" stroke="#333" stroke-width="0.7"/><path d="M3.4 17H10.6M7 13.4V20.6" stroke="#66d82a" stroke-width="2.6" fill="none"/><g transform="translate(13,14)"><path d="M0 0 L6 -1.5 M0 0 L3 4.5" stroke="#3c78d8" stroke-width="1.6" fill="none" transform="rotate(-20)"/><path d="M1 1 Q7 -2 8 3 Q8.5 7 4 8.5" stroke="#3c78d8" stroke-width="1.8" fill="none"/></g></g>
<g transform="translate(626.5,66.5) scale(1.0)"><path d="M7.5 2.7 l4.176 2.4 l-4.176 2.4 l-4.176 -2.4 Z" fill="#e6e6e6" stroke="#333" stroke-width="0.7"/><path d="M3.324 5.1 l4.176 2.4 v4.8 l-4.176 -2.4 Z" fill="#a8a8a8" stroke="#333" stroke-width="0.7"/><path d="M11.676 5.1 l-4.176 2.4 v4.8 l4.176 -2.4 Z" fill="#787878" stroke="#333" stroke-width="0.7"/><path d="M16.5 2.7 l4.176 2.4 l-4.176 2.4 l-4.176 -2.4 Z" fill="#f8f8f8" stroke="#333" stroke-width="0.7"/><path d="M12.324 5.1 l4.176 2.4 v4.8 l-4.176 -2.4 Z" fill="#e0e0e0" stroke="#333" stroke-width="0.7"/><path d="M20.676000000000002 5.1 l-4.176 2.4 v4.8 l4.176 -2.4 Z" fill="#c8c8c8" stroke="#333" stroke-width="0.7"/><rect x="3.4" y="9" width="6.4" height="12.5" rx="2.4" fill="#111"/><circle cx="6.6" cy="12.4" r="2.1" fill="#f0c000"/><circle cx="6.6" cy="18.1" r="2.1" fill="#18c818"/><rect x="14.2" y="9" width="6.4" height="12.5" rx="2.4" fill="#111"/><circle cx="17.4" cy="12.4" r="2.1" fill="#e01818"/><circle cx="17.4" cy="18.1" r="2.1" fill="#f0c000"/></g>
<g transform="translate(653.0,66.5) scale(1.0)"><path d="M7.5 2.7 l4.176 2.4 l-4.176 2.4 l-4.176 -2.4 Z" fill="#e6e6e6" stroke="#333" stroke-width="0.7"/><path d="M3.324 5.1 l4.176 2.4 v4.8 l-4.176 -2.4 Z" fill="#a8a8a8" stroke="#333" stroke-width="0.7"/><path d="M11.676 5.1 l-4.176 2.4 v4.8 l4.176 -2.4 Z" fill="#787878" stroke="#333" stroke-width="0.7"/><path d="M16.5 2.7 l4.176 2.4 l-4.176 2.4 l-4.176 -2.4 Z" fill="#f8f8f8" stroke="#333" stroke-width="0.7"/><path d="M12.324 5.1 l4.176 2.4 v4.8 l-4.176 -2.4 Z" fill="#e0e0e0" stroke="#333" stroke-width="0.7"/><path d="M20.676000000000002 5.1 l-4.176 2.4 v4.8 l4.176 -2.4 Z" fill="#c8c8c8" stroke="#333" stroke-width="0.7"/><path d="M7.1 13.2 A5.2 5.2 0 0 1 16.5 12.4" stroke="#2fb62f" stroke-width="3" fill="none"/><path d="M19.8 10.5 L13.3 14.3 L18.2 15.3 Z" fill="#2fb62f"/><path d="M16.9 16.8 A5.2 5.2 0 0 1 7.5 17.6" stroke="#e4d420" stroke-width="3" fill="none"/><path d="M4.2 19.5 L10.7 15.7 L5.8 14.7 Z" fill="#e4d420"/></g>
<g transform="translate(678.5,66.5) scale(1.0)"><path d="M7.5 2.7 l4.176 2.4 l-4.176 2.4 l-4.176 -2.4 Z" fill="#e6e6e6" stroke="#333" stroke-width="0.7"/><path d="M3.324 5.1 l4.176 2.4 v4.8 l-4.176 -2.4 Z" fill="#a8a8a8" stroke="#333" stroke-width="0.7"/><path d="M11.676 5.1 l-4.176 2.4 v4.8 l4.176 -2.4 Z" fill="#787878" stroke="#333" stroke-width="0.7"/><path d="M16.5 2.7 l4.176 2.4 l-4.176 2.4 l-4.176 -2.4 Z" fill="#f8f8f8" stroke="#333" stroke-width="0.7"/><path d="M12.324 5.1 l4.176 2.4 v4.8 l-4.176 -2.4 Z" fill="#e0e0e0" stroke="#333" stroke-width="0.7"/><path d="M20.676000000000002 5.1 l-4.176 2.4 v4.8 l4.176 -2.4 Z" fill="#c8c8c8" stroke="#333" stroke-width="0.7"/><path d="M3.1 15H9.9M6.5 11.6V18.4" stroke="#66d82a" stroke-width="2.6" fill="none"/><path d="M9 21 L14 13" stroke="#222" stroke-width="1.2"/><path d="M13 20H21" stroke="#e6dc00" stroke-width="2.6" fill="none"/></g>
<g transform="translate(705.5,66.5) scale(1.0)"><ellipse cx="15" cy="20.5" rx="6" ry="1.6" fill="#555" opacity=".35"/><path d="M6.5 5.2 V18.6 A5.5 2 0 0 0 17.5 18.6 V5.2 Z" fill="url(#gCylB)" stroke="none"/><path d="M6.5 5.2 V18.6 A5.5 2 0 0 0 17.5 18.6 V5.2" fill="none" stroke="#1a2a5a" stroke-width="0.9"/><ellipse cx="12" cy="5.2" rx="5.5" ry="2" fill="#8eb4ec" stroke="#1a2a5a" stroke-width="0.9"/><path d="M12 7 V20" stroke="#111" stroke-width="1.2" stroke-dasharray="2.6 2"/></g>
<g transform="translate(731.5,66.5) scale(1.0)"><ellipse cx="15" cy="20.5" rx="6" ry="1.6" fill="#555" opacity=".35"/><path d="M6.5 5.2 V18.6 A5.5 2 0 0 0 17.5 18.6 V5.2 Z" fill="url(#gCylB)" stroke="none"/><path d="M6.5 5.2 V18.6 A5.5 2 0 0 0 17.5 18.6 V5.2" fill="none" stroke="#1a2a5a" stroke-width="0.9"/><ellipse cx="12" cy="5.2" rx="5.5" ry="2" fill="#8eb4ec" stroke="#1a2a5a" stroke-width="0.9"/><path d="M10.6 7 V20.5 M13.6 7 V20.5" stroke="#f0e040" stroke-width="1.2"/><path d="M8.6 7 V20 M15.6 7 V20" stroke="#e8eef8" stroke-width=".8"/></g>
<g transform="translate(758.0,66.5) scale(1.0)"><ellipse cx="15" cy="20.5" rx="6" ry="1.6" fill="#555" opacity=".35"/><path d="M6.5 5.2 V18.6 A5.5 2 0 0 0 17.5 18.6 V5.2 Z" fill="#dfeaf6" stroke="none"/><path d="M6.5 5.2 V18.6 A5.5 2 0 0 0 17.5 18.6 V5.2" fill="none" stroke="#30d8e8" stroke-width="1.2"/><ellipse cx="12" cy="5.2" rx="5.5" ry="2" fill="#eef4fc" stroke="#30d8e8" stroke-width="1.2"/><path d="M7.5 12.5 L11.5 18 L18.5 8" stroke="#28b428" stroke-width="3" fill="none" stroke-linejoin="round"/></g>
<g transform="translate(783.0,66.5) scale(1.0)"><ellipse cx="9" cy="20.5" rx="7" ry="1.4" fill="#555" opacity=".35"/><path d="M6.5 5.2 V18.6 A5.5 2 0 0 0 17.5 18.6 V5.2 Z" fill="#e4ecf8" stroke="none"/><path d="M6.5 5.2 V18.6 A5.5 2 0 0 0 17.5 18.6 V5.2" fill="none" stroke="#30d8e8" stroke-width="1.2"/><ellipse cx="12" cy="5.2" rx="5.5" ry="2" fill="#f2f6fc" stroke="#30d8e8" stroke-width="1.2"/><rect x="15" y="2" width="5" height="5" fill="none" stroke="#e89830" stroke-width="1.4"/><circle cx="16" cy="6" r="1.4" fill="#e04830"/></g>
<g transform="translate(809.0,66.5) scale(1.0)"><path d="M6.5 5.2 V18.6 A5.5 2 0 0 0 17.5 18.6 V5.2 Z" fill="none" stroke="none"/><path d="M6.5 5.2 V18.6 A5.5 2 0 0 0 17.5 18.6 V5.2" fill="none" stroke="#8abcf0" stroke-width="0.9"/><path d="M6.5 18.6 A5.5 2 0 0 1 17.5 18.6" fill="none" stroke="#8abcf0" stroke-width="0.7200000000000001" opacity=".55"/><ellipse cx="12" cy="5.2" rx="5.5" ry="2" fill="none" stroke="#8abcf0" stroke-width="0.9"/><path d="M8.5 5.5 L10.5 20 M10.5 6.3 L8 19 M12 6.5 V21 M14 6.3 L16 19 M15.5 5.5 L13.5 20" stroke="#8abcf0" stroke-width=".7" fill="none"/></g>
<g transform="translate(835.0,66.5) scale(1.0)"><path d="M3 7 L12 4 L21 7 L12 10.5 Z" fill="#6a94e0" stroke="#10204a" stroke-width=".8"/><path d="M3 7 L12 10.5 V20.5 L5 14.5 Z" fill="#2e56b0" stroke="#10204a" stroke-width=".8"/><path d="M21 7 L12 10.5 V20.5 L19 14.5 Z" fill="#142a66" stroke="#10204a" stroke-width=".8"/></g>
<g transform="translate(876.5,66.5) scale(1.0)"><path d="M16.2426 13.2426 L3.5 19.5" stroke="#9aa0aa" stroke-width="3.2" stroke-linecap="round"/><circle cx="12" cy="9" r="6" fill="#cfe4f8" stroke="#8a94a6" stroke-width="1.8"/><path d="M8.4 8.4 a3.5999999999999996 3.5999999999999996 0 0 1 3.0 -3.0" stroke="#fff" stroke-width="1.2" fill="none" opacity=".9"/><path d="M10 6.6 l4.4 2.4 l-4.4 2.4 Z" fill="#6a88b8"/><path d="M18 13.1 l3.8280000000000003 2.2 l-3.8280000000000003 2.2 l-3.8280000000000003 -2.2 Z" fill="#bbb" stroke="#333" stroke-width="0.7"/><path d="M14.172 15.3 l3.8280000000000003 2.2 v4.4 l-3.8280000000000003 -2.2 Z" fill="#777" stroke="#333" stroke-width="0.7"/><path d="M21.828 15.3 l-3.8280000000000003 2.2 v4.4 l3.8280000000000003 -2.2 Z" fill="#555" stroke="#333" stroke-width="0.7"/><path d="M1 3 h4 M3 1 v4 M1 7 h4" stroke="#111" stroke-width="1"/></g>
<g transform="translate(903.0,66.5) scale(1.0)"><path d="M15.95976 13.45976 L4 19" stroke="#9aa0aa" stroke-width="3.2" stroke-linecap="round"/><circle cx="12" cy="9.5" r="5.6" fill="#cfe4f8" stroke="#8a94a6" stroke-width="1.8"/><path d="M8.64 8.94 a3.36 3.36 0 0 1 2.8 -2.8" stroke="#fff" stroke-width="1.2" fill="none" opacity=".9"/><path d="M10 7.2 l4.4 2.4 l-4.4 2.4 Z" fill="#6a88b8"/><path d="M18 13.1 l3.8280000000000003 2.2 l-3.8280000000000003 2.2 l-3.8280000000000003 -2.2 Z" fill="#bbb" stroke="#333" stroke-width="0.7"/><path d="M14.172 15.3 l3.8280000000000003 2.2 v4.4 l-3.8280000000000003 -2.2 Z" fill="#777" stroke="#333" stroke-width="0.7"/><path d="M21.828 15.3 l-3.8280000000000003 2.2 v4.4 l3.8280000000000003 -2.2 Z" fill="#555" stroke="#333" stroke-width="0.7"/><path d="M2 1.5 l3.8 0 l-3.8 3.8 Z" fill="#2fbf2f" stroke="#1f8f1f" stroke-width=".4"/><path d="M2.8 2.3 l3.2 3.2" stroke="#2fbf2f" stroke-width="1.5"/><path d="M21 1.5 l-3.8 0 l3.8 3.8 Z" fill="#2fbf2f" stroke="#1f8f1f" stroke-width=".4"/><path d="M20.2 2.3 l-3.2 3.2" stroke="#2fbf2f" stroke-width="1.5"/><path d="M2 19.5 l3.8 0 l-3.8 -3.8 Z" fill="#2fbf2f" stroke="#1f8f1f" stroke-width=".4"/><path d="M2.8 18.7 l3.2 -3.2" stroke="#2fbf2f" stroke-width="1.5"/><path d="M21 19.5 l-3.8 0 l3.8 -3.8 Z" fill="#2fbf2f" stroke="#1f8f1f" stroke-width=".4"/><path d="M20.2 18.7 l-3.2 -3.2" stroke="#2fbf2f" stroke-width="1.5"/></g>
<g transform="translate(929.0,66.5) scale(1.0)"><rect x="5.5" y="7" width="13" height="10.5" fill="url(#gFrame)" stroke="#333" stroke-width="1.1"/><path d="M2.5 3.5 l3.8 0 l-3.8 3.8 Z" fill="#2fbf2f" stroke="#1f8f1f" stroke-width=".4"/><path d="M3.3 4.3 l3.2 3.2" stroke="#2fbf2f" stroke-width="1.5"/><path d="M21.5 3.5 l-3.8 0 l3.8 3.8 Z" fill="#2fbf2f" stroke="#1f8f1f" stroke-width=".4"/><path d="M20.7 4.3 l-3.2 3.2" stroke="#2fbf2f" stroke-width="1.5"/><path d="M2.5 21 l3.8 0 l-3.8 -3.8 Z" fill="#2fbf2f" stroke="#1f8f1f" stroke-width=".4"/><path d="M3.3 20.2 l3.2 -3.2" stroke="#2fbf2f" stroke-width="1.5"/><path d="M21.5 21 l-3.8 0 l3.8 -3.8 Z" fill="#2fbf2f" stroke="#1f8f1f" stroke-width=".4"/><path d="M20.7 20.2 l-3.2 -3.2" stroke="#2fbf2f" stroke-width="1.5"/><text x="12" y="15.6" font-family="Liberation Sans,sans-serif" font-size="8.5" font-weight="bold" text-anchor="middle" fill="#2a2a8c">1:1</text></g>
<g transform="translate(955.0,66.5) scale(1.0)"><path d="M6.5 18 L17 7.5" stroke="#2cb82c" stroke-width="1.9"/><path d="M21 3.5 l-7 2 l5 5 Z" fill="#34c034" stroke="#1c8c1c" stroke-width=".5"/><circle cx="5.5" cy="18.5" r="3.4" fill="url(#gBall)" stroke="#444" stroke-width=".6"/></g>
<g transform="translate(981.5,66.5) scale(1.0)"><path d="M6.0 9.8 A6.4 6.4 0 0 1 17.5 8.8" stroke="#2ca82c" stroke-width="3.4" fill="none"/><path d="M21.2 6.7 L13.9 10.9 L19.4 12.0 Z" fill="#2ca82c"/><path d="M18.0 14.2 A6.4 6.4 0 0 1 6.5 15.2" stroke="#2ca82c" stroke-width="3.4" fill="none"/><path d="M2.8 17.3 L10.1 13.1 L4.6 12.0 Z" fill="#2ca82c"/></g>
<g transform="translate(1007.0,66.5) scale(1.0)"><g transform="translate(0,-2) translate(0,1.2) translate(12,8) scale(.96,.9) translate(-12,-8)"><path d="M1.5 10 Q6 2 13 2.2 Q19.5 2.6 22.8 9.4 Q18 5.8 12.5 6 Q6.5 6.2 1.5 10Z" fill="#2e3656"/><path d="M5 4.8 l-1 -1.2 M8.5 3.2 l-.5 -1.3 M12.5 2.4 v-1.3 M16.5 3 l.6 -1.2 M19.8 4.8 l1 -1" stroke="#3a4266" stroke-width=".7"/><path d="M2.2 10.2 Q7.5 4.4 13 4.6 Q18.6 4.8 22.2 9.4 Q18.4 12.6 12.6 12.8 Q6.6 12.8 2.2 10.2Z" fill="#cfc8d8" stroke="#5a6288" stroke-width=".6"/><circle cx="12.6" cy="8.5" r="4.1" fill="#4c6aa2"/><circle cx="12.6" cy="8.5" r="2.9" fill="#3a5488"/><circle cx="12.6" cy="8.5" r="1.7" fill="#141a30"/><circle cx="11.4" cy="7.2" r=".9" fill="#e8f0fc"/><path d="M2.2 10.2 Q7.5 4.4 13 4.6 Q18.6 4.8 22.2 9.4" fill="none" stroke="#2e3656" stroke-width="1.2"/></g><circle cx="12" cy="15.5" r="6.6" fill="url(#gSmile)" stroke="#b08820" stroke-width=".6"/><circle cx="9.8" cy="14" r=".9" fill="#333"/><circle cx="14.2" cy="14" r=".9" fill="#333"/><path d="M8.6 17 Q12 20.4 15.4 17" stroke="#7a4a10" stroke-width=".9" fill="none"/></g>
<g transform="translate(1050.0,66.5) scale(1.0)"><path d="M1.5 15.5 L12.5 8.5 L22.5 12.5 L22.5 14.5 L12.5 22.5 L1.5 17.5 Z" fill="#e2eaf8" stroke="#93a2c0" stroke-width=".7"/><path d="M7 17.5 V6.5" stroke="#1e6ae0" stroke-width="2.2"/><path d="M7 1.5 l-3 5.4 h6 Z" fill="#1e6ae0"/><path d="M7 17.5 L15 11.2" stroke="#22b422" stroke-width="2"/><path d="M18.8 8.2 l-5.8 1.2 l3.2 4 Z" fill="#22b422"/><path d="M7 17.5 L14 21" stroke="#e02020" stroke-width="2"/><path d="M17.6 23.4 l-5.6 -1 l3 -3.8 Z" fill="#e02020"/><circle cx="7" cy="17.5" r="2.1" fill="#e8e8e8" stroke="#666" stroke-width=".6"/></g>
<g transform="translate(1076.0,66.5) scale(1.0)"><path d="M8 8 L17 4 L23 8 L14 12 Z" fill="#e8edf6" stroke="#9aa4b8" stroke-width=".6"/><path d="M14 9 V2" stroke="#1e6ae0" stroke-width="1.2"/><path d="M14 9 l4 -2" stroke="#22b422" stroke-width="1.2"/><path d="M14 9 l4 2" stroke="#e02020" stroke-width="1.2"/><path d="M3 20 L12 10" stroke="#28a828" stroke-width="3"/><path d="M14.5 7 l-6.5 2 l4.6 4.4 Z" fill="#28a828"/><rect x="12" y="15" width="9" height="5" fill="#e4e4e4" stroke="#888" stroke-width=".8"/></g>
<g transform="translate(1102.5,66.5) scale(1.0)"><path d="M10 7 L18 3 L23 7 L15 11 Z" fill="#e8edf6" stroke="#9aa4b8" stroke-width=".6"/><path d="M16 8 V1" stroke="#1e6ae0" stroke-width="1.2"/><path d="M16 8 l4 -2" stroke="#22b422" stroke-width="1.2"/><path d="M16 8 l4 2" stroke="#e02020" stroke-width="1.2"/><path d="M5 12 L12 19" stroke="#28a828" stroke-width="3.2"/><path d="M2 9 l6.5 1 l-5 5 Z" fill="#28a828"/><path d="M15 22 l-6.5 -1 l5 -5 Z" fill="#28a828"/></g>
<g transform="translate(1144.5,66.5) scale(1.0)"><rect x="2.0" y="2.0" width="6.2" height="6.2" fill="#00c8f0"/><rect x="8.8" y="2.0" width="6.2" height="6.2" fill="#f0d000"/><rect x="15.6" y="2.0" width="6.2" height="6.2" fill="#00d800"/><rect x="2.0" y="8.8" width="6.2" height="6.2" fill="#f08000"/><rect x="8.8" y="8.8" width="6.2" height="6.2" fill="#a06a20"/><rect x="15.6" y="8.8" width="6.2" height="6.2" fill="#f000e0"/><rect x="2.0" y="15.6" width="6.2" height="6.2" fill="#0018e0"/><rect x="8.8" y="15.6" width="6.2" height="6.2" fill="#00a020"/><rect x="15.6" y="15.6" width="6.2" height="6.2" fill="#8a8a8a"/></g>
<g transform="translate(1171.0,66.5) scale(1.0)"><rect x="4" y="2" width="16" height="20" fill="#f0f4fc" stroke="#7a86a8" stroke-width="1"/><rect x="6.5" y="4" width="11" height="1.6" fill="#f0a830"/><rect x="6.5" y="7" width="11" height="1.2" fill="#9ab0d8"/><rect x="6.5" y="10.0" width="3" height="3" fill="#e02020"/><rect x="10.3" y="10.0" width="3" height="3" fill="#20b020"/><rect x="14.1" y="10.0" width="3" height="3" fill="#2040e0"/><rect x="6.5" y="13.6" width="3" height="3" fill="#f0d000"/><rect x="10.3" y="13.6" width="3" height="3" fill="#e000d0"/><rect x="14.1" y="13.6" width="3" height="3" fill="#00c0e0"/><rect x="6.5" y="17.2" width="3" height="3" fill="#f08000"/><rect x="10.3" y="17.2" width="3" height="3" fill="#888"/><rect x="14.1" y="17.2" width="3" height="3" fill="#804000"/></g>
<g transform="translate(1197.0,66.5) scale(1.0)"><circle cx="12" cy="12" r="9.6" fill="url(#gGreenBall)" stroke="#4a5a2a" stroke-width=".8"/><path d="M7 7 L17 17" stroke="#2a62c0" stroke-width="3" stroke-linecap="round"/><path d="M17 6.5 L7.5 17" stroke="#eef2f8" stroke-width="2.6" stroke-linecap="round"/><circle cx="7" cy="7" r="2.4" fill="none" stroke="#e8eef8" stroke-width="1.6"/></g>
<g transform="translate(1223.0,66.5) scale(1.0)"><rect x="2.5" y="3" width="19" height="18" fill="#f0f4fc" stroke="#4a5a88" stroke-width="1"/><rect x="2.5" y="3" width="19" height="4" fill="#3a6ac8"/><rect x="4.0" y="8.5" width="2" height="2" fill="#b09030"/><rect x="6.8" y="8.5" width="2" height="2" fill="#b09030"/><rect x="9.6" y="8.5" width="2" height="2" fill="#b09030"/><rect x="12.399999999999999" y="8.5" width="2" height="2" fill="#b09030"/><rect x="15.2" y="8.5" width="2" height="2" fill="#b09030"/><rect x="18.0" y="8.5" width="2" height="2" fill="#b09030"/><path d="M8 11 L18 20" stroke="#2a62c0" stroke-width="2.4" stroke-linecap="round"/><path d="M18 11 L8.5 20" stroke="#8aa0c8" stroke-width="2.2" stroke-linecap="round"/><rect x="4" y="11.5" width="2" height="2" fill="#b09030"/><rect x="4" y="14.3" width="2" height="2" fill="#b09030"/><rect x="4" y="17.1" width="2" height="2" fill="#b09030"/></g>
<g transform="translate(1249.5,66.5) scale(1.0)"><rect x="3" y="4" width="18" height="17" fill="none" stroke="#223" stroke-width="1.2" stroke-dasharray="1.4 1.8"/><path d="M9 12 L17 5 L23 7 L22 12 L15 15 L11 15 Z" fill="#f0c890" stroke="#a87838" stroke-width=".7"/><path d="M17 5 L23 3 L24 8 L23 7Z" fill="#4a6ab8"/><path d="M3.9 17H11.1M7.5 13.4V20.6" stroke="#f0e020" stroke-width="1.6" fill="none"/><circle cx="7.5" cy="17" r="2.2" fill="none" stroke="#3a62d8" stroke-width="1"/></g>
<g transform="translate(1275.0,66.5) scale(1.0)"><g transform="translate(12,12.5) scale(.8) translate(-12,-12)"><path d="M7 4 L22 2 L18 18 L2 21 Z" fill="#e06060" stroke="#2a5ad0" stroke-width="1.6"/><path d="M5.6 9.5 L20.6 7.3 M4.4 14.6 L19.4 12.4 M11.5 3.4 L7 20 M16.5 2.8 L12.5 19" stroke="#f4d8d8" stroke-width=".9"/></g></g>
<g transform="translate(5.6,131.6) scale(0.95)"><path d="M18.95976 13.45976 L6 20" stroke="#a8acb4" stroke-width="3.2" stroke-linecap="round"/><circle cx="15" cy="9.5" r="5.6" fill="#c4dcf4" stroke="#6a8ab8" stroke-width="1.8"/><path d="M11.64 8.94 a3.36 3.36 0 0 1 2.8 -2.8" stroke="#fff" stroke-width="1.2" fill="none" opacity=".9"/><path d="M4 3.5 L10 6.5 M3.5 7 L9 9 M4 11 L9 11.6 M5 14.5 L9.6 13.4" stroke="#9aa8c0" stroke-width="1.1"/></g>
<g transform="translate(31.6,131.6) scale(0.95)"><path d="M4 5 L19 19 M4 11 L12 19" stroke="#3a72d8" stroke-width="1.4"/><g transform="translate(5,19) rotate(-47.0)"><path d="M0 0 L4 -2 V2 Z" fill="#e8c8a0" stroke="#333" stroke-width=".5"/><path d="M0 0 L1.6 -.8 V.8Z" fill="#222"/><rect x="4" y="-2" width="14.3" height="4" fill="#e8963c" stroke="#6a3a10" stroke-width=".5"/><rect x="4" y="-2" width="14.3" height="1.4" fill="#f6c27a"/><rect x="18.3" y="-2" width="2.2" height="4" fill="#e02828" stroke="#6a1010" stroke-width=".5"/></g></g>
<path d="M47.7 132.5 h6 l-3 3.2 Z" fill="#111"/>
<g transform="translate(5.6,157.6) scale(0.95)"><rect x="5" y="6" width="14" height="12" fill="url(#gFrame)" stroke="#223" stroke-width=".9"/><path d="M2 3 l3.8 0 l-3.8 3.8 Z" fill="#2fbf2f" stroke="#1f8f1f" stroke-width=".4"/><path d="M2.8 3.8 l3.2 3.2" stroke="#2fbf2f" stroke-width="1.5"/><path d="M22 3 l-3.8 0 l3.8 3.8 Z" fill="#2fbf2f" stroke="#1f8f1f" stroke-width=".4"/><path d="M21.2 3.8 l-3.2 3.2" stroke="#2fbf2f" stroke-width="1.5"/><path d="M2 21 l3.8 0 l-3.8 -3.8 Z" fill="#2fbf2f" stroke="#1f8f1f" stroke-width=".4"/><path d="M2.8 20.2 l3.2 -3.2" stroke="#2fbf2f" stroke-width="1.5"/><path d="M22 21 l-3.8 0 l3.8 -3.8 Z" fill="#2fbf2f" stroke="#1f8f1f" stroke-width=".4"/><path d="M21.2 20.2 l-3.2 -3.2" stroke="#2fbf2f" stroke-width="1.5"/></g>
<g transform="translate(31.6,157.6) scale(0.95)"><path d="M9 4 Q2 4 5 9 Q9 13 15 12 Q22 12 20 17 Q17 22 11 19" stroke="#3a72d8" stroke-width="1.6" fill="none"/><g transform="translate(5,19) rotate(-47.0)"><path d="M0 0 L4 -2 V2 Z" fill="#e8c8a0" stroke="#333" stroke-width=".5"/><path d="M0 0 L1.6 -.8 V.8Z" fill="#222"/><rect x="4" y="-2" width="14.3" height="4" fill="#e8963c" stroke="#6a3a10" stroke-width=".5"/><rect x="4" y="-2" width="14.3" height="1.4" fill="#f6c27a"/><rect x="18.3" y="-2" width="2.2" height="4" fill="#e02828" stroke="#6a1010" stroke-width=".5"/></g></g>
<path d="M47.7 158.5 h6 l-3 3.2 Z" fill="#111"/>
<g transform="translate(5.6,183.6) scale(0.95)"><path d="M16.2426 13.2426 L3.5 19.5" stroke="#9aa0aa" stroke-width="3.2" stroke-linecap="round"/><circle cx="12" cy="9" r="6" fill="#cfe4f8" stroke="#8a94a6" stroke-width="1.8"/><path d="M8.4 8.4 a3.5999999999999996 3.5999999999999996 0 0 1 3.0 -3.0" stroke="#fff" stroke-width="1.2" fill="none" opacity=".9"/><path d="M10 6.6 l4.4 2.4 l-4.4 2.4 Z" fill="#6a88b8"/><path d="M18 13.1 l3.8280000000000003 2.2 l-3.8280000000000003 2.2 l-3.8280000000000003 -2.2 Z" fill="#bbb" stroke="#333" stroke-width="0.7"/><path d="M14.172 15.3 l3.8280000000000003 2.2 v4.4 l-3.8280000000000003 -2.2 Z" fill="#777" stroke="#333" stroke-width="0.7"/><path d="M21.828 15.3 l-3.8280000000000003 2.2 v4.4 l3.8280000000000003 -2.2 Z" fill="#555" stroke="#333" stroke-width="0.7"/><path d="M1 3 h4 M3 1 v4 M1 7 h4" stroke="#111" stroke-width="1"/></g>
<g transform="translate(31.6,183.6) scale(0.95)"><path d="M3.5 4.5 H20.5 V12 H18 V16 H20.5 V20.5 H3.5 Z" fill="none" stroke="#f0e400" stroke-width="1.6"/><path d="M6.5 12 L10.5 17.5 L18 6.5" stroke="#4cc832" stroke-width="3.2" fill="none" stroke-linejoin="round"/></g>
<path d="M21.5 184.5 h6 l-3 3.2 Z" fill="#111"/>
<path d="M47.7 184.5 h6 l-3 3.2 Z" fill="#111"/>
<g transform="translate(5.6,209.6) scale(0.95)"><path d="M1.5 15.5 L12.5 8.5 L22.5 12.5 L22.5 14.5 L12.5 22.5 L1.5 17.5 Z" fill="#e2eaf8" stroke="#93a2c0" stroke-width=".7"/><path d="M7 17.5 V6.5" stroke="#1e6ae0" stroke-width="2.2"/><path d="M7 1.5 l-3 5.4 h6 Z" fill="#1e6ae0"/><path d="M7 17.5 L15 11.2" stroke="#22b422" stroke-width="2"/><path d="M18.8 8.2 l-5.8 1.2 l3.2 4 Z" fill="#22b422"/><path d="M7 17.5 L14 21" stroke="#e02020" stroke-width="2"/><path d="M17.6 23.4 l-5.6 -1 l3 -3.8 Z" fill="#e02020"/><circle cx="7" cy="17.5" r="2.1" fill="#e8e8e8" stroke="#666" stroke-width=".6"/></g>
<g transform="translate(31.6,209.6) scale(0.95)"><path d="M3 14 Q5 2 9 10 Q13 20 16 17 Q19 14 21 20" stroke="#3a72d8" stroke-width="1.6" fill="none"/><g transform="translate(5,19) rotate(-47.0)"><path d="M0 0 L4 -2 V2 Z" fill="#e8c8a0" stroke="#333" stroke-width=".5"/><path d="M0 0 L1.6 -.8 V.8Z" fill="#222"/><rect x="4" y="-2" width="14.3" height="4" fill="#e8963c" stroke="#6a3a10" stroke-width=".5"/><rect x="4" y="-2" width="14.3" height="1.4" fill="#f6c27a"/><rect x="18.3" y="-2" width="2.2" height="4" fill="#e02828" stroke="#6a1010" stroke-width=".5"/></g></g>
<path d="M21.5 210.5 h6 l-3 3.2 Z" fill="#111"/>
<path d="M47.7 210.5 h6 l-3 3.2 Z" fill="#111"/>
<g transform="translate(5.6,235.6) scale(0.95)"><path d="M3 5 l9 -2.4 l7 1.6 l-9 2.6Z" fill="#7f8ef0" stroke="#4a56b8" stroke-width=".4"/><path d="M3 8 l9 -2.4 l7 1.6 l-9 2.6Z" fill="#c8d0f8" stroke="#8890c8" stroke-width=".4"/><path d="M3 11 l9 -2.4 l7 1.6 l-9 2.6Z" fill="#e8e8ea" stroke="#888" stroke-width=".4"/><ellipse cx="13" cy="17" rx="7.6" ry="4.6" fill="#c89870" stroke="#7a5030" stroke-width=".7"/><circle cx="9.5" cy="18" r="1.7" fill="#1c50e0"/><circle cx="13.8" cy="18.8" r="1.7" fill="#18a828"/><circle cx="16.6" cy="15.8" r="1.6" fill="#d82020"/><path d="M12 14.5 L21.5 2.5" stroke="#b06a28" stroke-width="1.6"/><path d="M11 16 l2.4 -3 l1.2 1 Z" fill="#ddd" stroke="#555" stroke-width=".4"/></g>
<g transform="translate(31.6,235.6) scale(0.95)"><path d="M8 6 L22 3 L17 17 L2 21 Z" fill="#a8c8f8" stroke="#2a5ad0" stroke-width="1.6"/><path d="M5 13.6 L19.6 10 M15 4.6 L9.6 19" stroke="#e8f0fc" stroke-width="1.2"/></g>
<path d="M21.5 236.5 h6 l-3 3.2 Z" fill="#111"/>
<path d="M47.7 236.5 h6 l-3 3.2 Z" fill="#111"/>
<g transform="translate(5.6,261.6) scale(0.95)"><path d="M6.2 9.9 A6.2 6.2 0 0 1 17.4 8.9" stroke="#4a8ad8" stroke-width="3.6" fill="none"/><path d="M21.3 6.6 L13.5 11.1 L19.3 12.3 Z" fill="#4a8ad8"/><path d="M17.8 14.1 A6.2 6.2 0 0 1 6.6 15.1" stroke="#7ab0ec" stroke-width="3.6" fill="none"/><path d="M2.7 17.4 L10.5 12.8 L4.7 11.7 Z" fill="#7ab0ec"/></g>
<g transform="translate(31.6,261.6) scale(0.95)"><ellipse cx="13" cy="21" rx="8" ry="1.6" fill="#666" opacity=".3"/><path d="M12 3.5 l6.96 4.0 l-6.96 4.0 l-6.96 -4.0 Z" fill="#d8d8d8" stroke="#444" stroke-width="0.7"/><path d="M5.04 7.5 l6.96 4.0 v8 l-6.96 -4.0 Z" fill="#8c8c8c" stroke="#444" stroke-width="0.7"/><path d="M18.96 7.5 l-6.96 4.0 v8 l6.96 -4.0 Z" fill="#6a6a6a" stroke="#444" stroke-width="0.7"/></g>
<path d="M21.5 262.5 h6 l-3 3.2 Z" fill="#111"/>
<path d="M47.7 262.5 h6 l-3 3.2 Z" fill="#111"/>
<g transform="translate(5.6,287.6) scale(0.95)"><g transform="translate(12,11) scale(1.0)"><ellipse cx="0" cy="9.5" rx="5" ry="1.4" fill="#666" opacity=".35"/><path d="M-4.2 -4.5 Q-4 -8.6 0.2 -8.6 Q4.6 -8.6 4.6 -4.8 Q4.6 -2.4 2 -1 Q0.8 -.2 .8 2.2" fill="none" stroke="#3a72c8" stroke-width="2.6" stroke-linecap="round"/><circle cx=".8" cy="6.4" r="1.7" fill="#3a72c8"/></g></g>
<g transform="translate(31.6,287.6) scale(0.95)"><path d="M4.5 4 V21 M19.5 4 V21" stroke="#222" stroke-width="1.2"/><path d="M6 8 H18" stroke="#d8c800" stroke-width="1.4"/><path d="M5 8 l3.5 -2.4 v4.8 Z M19 8 l-3.5 -2.4 v4.8 Z" fill="#d8c800" stroke="#8a8000" stroke-width=".3"/></g>
<path d="M21.5 288.5 h6 l-3 3.2 Z" fill="#111"/>
<path d="M47.7 288.5 h6 l-3 3.2 Z" fill="#111"/>
<g transform="translate(5.6,313.6) scale(0.95)"><path d="M5 8 L7 21 H17 L19 8 Z" fill="url(#gTrash)" stroke="#4a7aa8" stroke-width=".8"/><ellipse cx="12" cy="8" rx="7.4" ry="2" fill="#d8e8f8" stroke="#4a7aa8" stroke-width=".8"/><path d="M10 6.5 l2 -4 l2 4 Z" fill="#e8d020" stroke="#444" stroke-width=".5"/><path d="M9 12 l3 2 l3 -2 M9.5 17 l2.5 -2 l2.5 2" stroke="#e8f4ff" stroke-width="1" fill="none"/></g>
<g transform="translate(31.6,313.6) scale(0.95)"><path d="M3 9 L10.5 2.5 V6.2 Q19.5 6 19.5 14 Q19.5 18 15.5 20.5 Q17 17.5 15.5 14.5 Q14 11.8 10.5 12 V15.5 Z" fill="#a8a8a8" stroke="#808080" stroke-width=".8" stroke-linejoin="round"/></g>
<path d="M21.5 314.5 h6 l-3 3.2 Z" fill="#111"/>
<path d="M47.7 314.5 h6 l-3 3.2 Z" fill="#111"/>
<g transform="translate(5.6,339.6) scale(0.95)"><path d="M3 3 V20" stroke="#333" stroke-width="1.6"/><path d="M5 3 V16" stroke="#58a0d8" stroke-width="1.2"/><circle cx="13" cy="11" r="6" fill="none" stroke="#a83818" stroke-width="1.6"/><circle cx="13" cy="11" r="2" fill="#f09020"/><path d="M13 2.5 V19.5 M4.5 11 H21.5 M7 5 L19 17 M19 5 L7 17" stroke="#a83818" stroke-width="1"/><path d="M2 20 L10 16 L16 19 L8 23 Z M10 16 L16 13.5 L21 16 L16 19" fill="#f8a030" stroke="#e06a10" stroke-width=".7"/></g>
<g transform="translate(31.6,339.6) scale(0.95)"><path d="M9 9 h8.06 l4.94 4.94 v8.059999999999999 h-13 Z" fill="#f4f6fc" stroke="#111" stroke-width="1"/><path d="M17.060000000000002 9 v4.94 h4.94" fill="#fff" stroke="#111" stroke-width=".8"/><path d="M1 3 h5.949999999999999 l1.7000000000000002 1.95 h8.5 v11.049999999999999 h-16.15 Z" fill="#e2b23c" stroke="#a88a2a" stroke-width=".6"/><path d="M1 16 l2.55 -8.450000000000001 h16.15 l-2.55 8.450000000000001 Z" fill="#f6d774" stroke="#a88a2a" stroke-width=".6"/><path d="M11 4 h7 v5 h-7Z" fill="#38b048"/><path d="M12 2.5 l5 1 -1 3Z" fill="#58d060"/></g>
<path d="M21.5 340.5 h6 l-3 3.2 Z" fill="#111"/>
<g shape-rendering="crispEdges"><defs><linearGradient id="gRod" gradientUnits="userSpaceOnUse" x1="807.6" y1="287.6" x2="756.4" y2="376.4"><stop offset="0" stop-color="#7e7e7e"/><stop offset="0.06" stop-color="#a4a4a4"/><stop offset="0.45" stop-color="#d6d6d6"/><stop offset="0.8" stop-color="#a6a6a6"/><stop offset="0.95" stop-color="#8a8a8a"/><stop offset="1" stop-color="#6a6a6a"/></linearGradient>
<linearGradient id="gHole" x1="1" y1="0.5" x2="0" y2="0.5"><stop offset="0" stop-color="#5a5a5a"/><stop offset="0.12" stop-color="#8a8a8a"/><stop offset="0.5" stop-color="#dadada"/><stop offset="0.85" stop-color="#b0b0b0"/><stop offset="1" stop-color="#8a8a8a"/></linearGradient>
<linearGradient id="gRing" x1="1" y1="0.3" x2="0" y2="0.7"><stop offset="0" stop-color="#4a4a4a"/><stop offset="0.5" stop-color="#6e6e6e"/><stop offset="1" stop-color="#9a9a9a"/></linearGradient>
<linearGradient id="gTopOut" x1="0" y1="0.2" x2="1" y2="0"><stop offset="0" stop-color="#626262"/><stop offset="0.35" stop-color="#a8a8a8"/><stop offset="0.66" stop-color="#ffffff"/><stop offset="1" stop-color="#c4c4c4"/></linearGradient>
<linearGradient id="gTopIn" x1="0" y1="0" x2="1" y2="0"><stop offset="0" stop-color="#484848"/><stop offset="0.5" stop-color="#868686"/><stop offset="1" stop-color="#b2b2b2"/></linearGradient>
<linearGradient id="gBore" x1="0.7" y1="0" x2="0.3" y2="1"><stop offset="0" stop-color="#484848"/><stop offset="0.5" stop-color="#5c5c5c"/><stop offset="0.78" stop-color="#a8a8a8"/><stop offset="1" stop-color="#d8d8d8"/></linearGradient><linearGradient id="gBoreA" x1="0.7" y1="0" x2="0.3" y2="1"><stop offset="0" stop-color="#464646"/><stop offset="0.6" stop-color="#5a5a5a"/><stop offset="1" stop-color="#8c8c8c"/></linearGradient>
<linearGradient id="gBore2" x1="0.6" y1="0" x2="0.4" y2="1"><stop offset="0" stop-color="#9a9a9a"/><stop offset="0.3" stop-color="#6a6a6a"/><stop offset="0.6" stop-color="#5a5a5a"/><stop offset="1" stop-color="#a4a4a4"/></linearGradient>
</defs>
<polygon points="901.8,193.5 1266.3,401.8 902.8,611.7 538.3,403.4" fill="rgba(255,255,255,0.075)" stroke="none"/>
<polygon points="901.8,193.5 1266.3,401.8 902.8,611.7 538.3,403.4" fill="none" stroke="#dcdcdc" stroke-width="1" stroke-dasharray="3.4 5.8"/>
<polyline points="1226,379 1266.3,401.8 1212,432.5" fill="none" stroke="#c9cfdd" stroke-width="1"/>
<polygon points="807.5,289.4 805.2,288.3 802.7,287.5 800.0,287.1 797.2,287.6 794.3,289.3 791.3,291.0 788.2,292.8 785.1,294.6 781.9,296.5 778.7,298.3 775.6,300.1 772.5,301.9 769.5,303.6 766.6,305.3 763.8,308.0 761.1,311.5 758.6,315.2 756.3,319.0 754.1,322.9 752.2,326.9 750.5,331.0 749.0,335.0 747.8,339.1 746.9,343.1 746.2,347.1 745.8,351.0 745.7,354.7 745.8,358.3 746.2,361.6 746.9,364.8 747.8,367.7 749.0,370.4 750.5,372.8 752.2,374.9 754.1,376.7 756.3,378.2 877.7,447.5 928.9,358.7" fill="url(#gRod)" stroke="#111" stroke-width="1" stroke-linejoin="round"/>
<polygon points="765.5,305.9 798.3,287.0 823.9,301.6 791.1,320.5" fill="#acacac" stroke="#111" stroke-width="1" stroke-linejoin="round"/>
<polygon points="1158.6,624.7 1158.6,611.2 940.5,486.6 940.5,500.1" fill="#999999" stroke="#101010" stroke-width="1.15" stroke-linejoin="round"/>
<polygon points="1212.5,518.1 1222.3,512.5 1004.2,387.9 994.4,393.5" fill="#b0b0b0" stroke="#101010" stroke-width="1.15" stroke-linejoin="round"/>
<polygon points="1207.3,527.1 1212.5,524.1 994.4,399.5 989.2,402.5" fill="#b0b0b0" stroke="#101010" stroke-width="1.15" stroke-linejoin="round"/>
<polygon points="1212.5,524.1 1212.5,518.1 994.4,393.5 994.4,399.5" fill="#999999" stroke="#101010" stroke-width="1.15" stroke-linejoin="round"/>
<polygon points="1158.6,611.2 1163.8,608.2 945.7,483.6 940.5,486.6" fill="#b0b0b0" stroke="#101010" stroke-width="1.15" stroke-linejoin="round"/>
<polygon points="1163.8,608.2 1163.8,602.2 945.7,477.6 945.7,483.6" fill="#999999" stroke="#101010" stroke-width="1.15" stroke-linejoin="round"/>
<polygon points="1207.3,473.8 1222.3,465.2 1004.2,340.6 989.2,349.2" fill="#b0b0b0" stroke="#101010" stroke-width="1.15" stroke-linejoin="round"/>
<polygon points="1117.8,646.3 1117.8,628.8 899.6,504.2 899.6,521.7" fill="#999999" stroke="#101010" stroke-width="1.15" stroke-linejoin="round"/>
<polygon points="1212.5,432.1 1212.5,426.1 994.4,301.5 994.4,307.5" fill="#999999" stroke="#101010" stroke-width="1.15" stroke-linejoin="round"/>
<polygon points="1079.0,657.2 1084.2,654.2 866.0,529.6 860.8,532.6" fill="#b0b0b0" stroke="#101010" stroke-width="1.15" stroke-linejoin="round"/>
<polygon points="1214.1,355.7 1224.0,360.5 1005.9,235.9 995.9,231.1" fill="#686868" stroke="#101010" stroke-width="1.15" stroke-linejoin="round"/>
<polygon points="1019.4,694.6 1019.4,658.6 801.3,534.0 801.3,570.0" fill="#999999" stroke="#101010" stroke-width="1.15" stroke-linejoin="round"/>
<polygon points="1176.9,377.2 1214.1,355.7 995.9,231.1 958.8,252.6" fill="#b0b0b0" stroke="#101010" stroke-width="1.15" stroke-linejoin="round"/>
<polygon points="1161.7,413.6 1169.3,410.8 951.2,286.2 943.6,289.0" fill="#9c9c9c" stroke="#101010" stroke-width="1.15" stroke-linejoin="round"/>
<polygon points="1169.3,410.8 1176.9,377.2 958.8,252.6 951.2,286.2" fill="#b8b8b8" stroke="#101010" stroke-width="1.15" stroke-linejoin="round"/>
<polygon points="1019.4,658.6 1020.9,655.2 802.8,530.6 801.3,534.0" fill="#cdcdcd" stroke="#101010" stroke-width="1.15" stroke-linejoin="round"/>
<polygon points="1029.6,632.7 1034.2,630.1 816.1,505.5 811.5,508.1" fill="#b0b0b0" stroke="#101010" stroke-width="1.15" stroke-linejoin="round"/>
<polygon points="1150.4,413.1 1161.7,413.6 943.6,289.0 932.3,288.5" fill="#737373" stroke="#101010" stroke-width="1.15" stroke-linejoin="round"/>
<polygon points="1020.9,655.2 1020.9,633.0 802.8,508.4 802.8,530.6" fill="#999999" stroke="#101010" stroke-width="1.15" stroke-linejoin="round"/>
<polygon points="1020.9,633.0 1029.6,628.0 811.5,503.4 802.8,508.4" fill="#b0b0b0" stroke="#101010" stroke-width="1.15" stroke-linejoin="round"/>
<polygon points="1034.2,630.1 1034.2,581.6 816.1,457.0 816.1,505.5" fill="#999999" stroke="#101010" stroke-width="1.15" stroke-linejoin="round"/>
<polygon points="1020.9,580.7 1034.2,573.1 816.1,448.5 802.8,456.1" fill="#b0b0b0" stroke="#101010" stroke-width="1.15" stroke-linejoin="round"/>
<polygon points="1020.9,589.2 1020.9,580.7 802.8,456.1 802.8,464.6" fill="#999999" stroke="#101010" stroke-width="1.15" stroke-linejoin="round"/>
<polygon points="1034.2,573.1 1034.2,529.1 816.1,404.5 816.1,448.5" fill="#999999" stroke="#101010" stroke-width="1.15" stroke-linejoin="round"/>
<polygon points="1090.2,449.3 1092.2,445.4 874.1,320.8 872.1,324.7" fill="#d0d0d0" stroke="#101010" stroke-width="1.15" stroke-linejoin="round"/>
<polygon points="1074.1,466.2 1090.2,449.3 872.1,324.7 856.0,341.6" fill="#cccccc" stroke="#101010" stroke-width="1.15" stroke-linejoin="round"/>
<polygon points="1087.4,405.4 1154.8,366.4 936.7,241.8 869.2,280.8" fill="#b0b0b0" stroke="#101010" stroke-width="1.15" stroke-linejoin="round"/>
<polygon points="1092.2,445.4 1085.4,431.7 867.3,307.1 874.1,320.8" fill="#686868" stroke="#101010" stroke-width="1.15" stroke-linejoin="round"/>
<polygon points="1082.1,431.7 1079.3,426.1 861.2,301.5 864.0,307.1" fill="#686868" stroke="#101010" stroke-width="1.15" stroke-linejoin="round"/>
<polygon points="1020.9,541.3 1020.9,516.2 802.8,391.6 802.8,416.7" fill="#999999" stroke="#101010" stroke-width="1.15" stroke-linejoin="round"/>
<polygon points="1079.3,426.1 1087.4,405.4 869.2,280.8 861.2,301.5" fill="#c9c9c9" stroke="#101010" stroke-width="1.15" stroke-linejoin="round"/>
<polygon points="1020.9,516.2 1019.4,515.0 801.3,390.4 802.8,391.6" fill="#686868" stroke="#101010" stroke-width="1.15" stroke-linejoin="round"/>
<polygon points="1027.0,463.7 1065.3,441.6 847.2,317.0 808.9,339.1" fill="#b0b0b0" stroke="#101010" stroke-width="1.15" stroke-linejoin="round"/>
<polygon points="1019.4,515.0 1019.4,476.6 801.3,352.0 801.3,390.4" fill="#999999" stroke="#101010" stroke-width="1.15" stroke-linejoin="round"/>
<polygon points="1019.4,476.6 1027.0,463.7 808.9,339.1 801.3,352.0" fill="#d2d2d2" stroke="#101010" stroke-width="1.15" stroke-linejoin="round"/>
<path d="M1176.9 377.2 L958.8 252.6" stroke="#0a0a0a" stroke-width="2"/>
<ellipse cx="951.2" cy="288.5" rx="31.6" ry="18.2" fill="url(#gTopOut)" stroke="#111" stroke-width="1"/>
<ellipse cx="950.6" cy="290.5" rx="27.6" ry="15.4" fill="url(#gTopIn)" stroke="#111" stroke-width="1"/>
<ellipse cx="1087.5" cy="366.4" rx="31.6" ry="18.2" fill="url(#gTopOut)" stroke="#111" stroke-width="1"/>
<ellipse cx="1086.9" cy="368.4" rx="27.6" ry="15.4" fill="url(#gTopIn)" stroke="#111" stroke-width="1"/>
<polygon points="1028.7,699.7 1019.4,694.6 1019.4,658.6 1020.9,655.2 1020.9,633.0 1029.6,628.0 1029.6,632.7 1034.2,630.1 1034.2,581.6 1020.9,589.2 1020.9,580.7 1034.2,573.1 1034.2,529.1 1029.6,531.7 1029.6,536.3 1020.9,541.3 1020.9,516.2 1019.4,515.0 1019.4,476.6 1027.0,463.7 1065.3,441.6 1067.7,449.3 1074.1,466.2 1090.2,449.3 1092.2,445.4 1085.4,431.7 1082.1,431.7 1079.3,426.1 1087.4,405.4 1154.8,366.4 1162.1,377.1 1160.9,385.9 1157.3,390.7 1150.4,413.1 1161.7,413.6 1169.3,410.8 1176.9,377.2 1214.1,355.7 1224.0,360.5 1224.0,396.5 1222.3,400.0 1222.3,426.5 1212.5,432.1 1212.5,426.1 1207.3,429.1 1207.3,473.8 1222.3,465.2 1222.3,473.6 1207.3,482.2 1207.3,527.1 1212.5,524.1 1212.5,518.1 1222.3,512.5 1222.3,539.0 1224.0,540.5 1224.0,576.5 1214.9,592.2 1158.6,624.7 1158.6,611.2 1163.8,608.2 1163.8,602.2 1125.0,624.6 1125.0,642.1 1117.8,646.3 1117.8,628.8 1079.0,651.2 1079.0,657.2 1084.2,654.2 1084.2,665.7 1084.2,667.7" fill="#464646" stroke="#141414" stroke-width="1.2" stroke-linejoin="round"/>
<clipPath id="cBore"><ellipse cx="1121.4" cy="527.7" rx="91.85" ry="53.03" transform="rotate(-60 1121.4 527.7)" /></clipPath>
<ellipse cx="1121.4" cy="527.7" rx="91.85" ry="53.03" transform="rotate(-60 1121.4 527.7)" fill="url(#gBoreA)" stroke="#0c0c0c" stroke-width="1.2"/>
<g clip-path="url(#cBore)">
<ellipse cx="1120.1" cy="527.0" rx="88.79" ry="51.26" transform="rotate(-60 1120.1 527.0)" fill="url(#gBore)" stroke="#0c0c0c" stroke-width="1"/>
<ellipse cx="1116.9" cy="525.1" rx="86.95" ry="50.20" transform="rotate(-60 1116.9 525.1)" fill="#464646" stroke="#0c0c0c" stroke-width="1"/>
</g>
<ellipse cx="1121.4" cy="527.7" rx="91.85" ry="53.03" transform="rotate(-60 1121.4 527.7)" fill="none" stroke="#0c0c0c" stroke-width="1.2"/>
<ellipse cx="1114.5" cy="523.8" rx="75.20" ry="43.42" transform="rotate(-60 1114.5 523.8)" fill="url(#gBore2)" stroke="#0c0c0c" stroke-width="1"/>
<ellipse cx="1113.6" cy="523.2" rx="71.28" ry="41.15" transform="rotate(-60 1113.6 523.2)" fill="#464646" stroke="#0c0c0c" stroke-width="1"/>
<ellipse cx="1112.4" cy="522.5" rx="63.93" ry="36.91" transform="rotate(-60 1112.4 522.5)" fill="#444" stroke="#0c0c0c" stroke-width="1.1"/>
<ellipse cx="1043.7" cy="662.3" rx="31.84" ry="18.38" transform="rotate(-60 1043.7 662.3)" fill="url(#gRing)" stroke="#0c0c0c" stroke-width="1.1"/>
<ellipse cx="1042.1" cy="661.3" rx="28.17" ry="16.26" transform="rotate(-60 1042.1 661.3)" fill="url(#gHole)" stroke="#0c0c0c" stroke-width="1"/>
<ellipse cx="1043.7" cy="482.9" rx="31.84" ry="18.38" transform="rotate(-60 1043.7 482.9)" fill="url(#gRing)" stroke="#0c0c0c" stroke-width="1.1"/>
<ellipse cx="1042.1" cy="481.9" rx="28.17" ry="16.26" transform="rotate(-60 1042.1 481.9)" fill="url(#gHole)" stroke="#0c0c0c" stroke-width="1"/>
<ellipse cx="1199.1" cy="572.6" rx="31.84" ry="18.38" transform="rotate(-60 1199.1 572.6)" fill="url(#gRing)" stroke="#0c0c0c" stroke-width="1.1"/>
<ellipse cx="1197.5" cy="571.6" rx="28.17" ry="16.26" transform="rotate(-60 1197.5 571.6)" fill="url(#gHole)" stroke="#0c0c0c" stroke-width="1"/>
<ellipse cx="1199.1" cy="393.2" rx="31.84" ry="18.38" transform="rotate(-60 1199.1 393.2)" fill="url(#gRing)" stroke="#0c0c0c" stroke-width="1.1"/>
<ellipse cx="1197.5" cy="392.2" rx="28.17" ry="16.26" transform="rotate(-60 1197.5 392.2)" fill="url(#gHole)" stroke="#0c0c0c" stroke-width="1"/>
<path d="M799.2 552.5 L856.5 585.2" fill="none" stroke="#e4e8f0" stroke-opacity=".8" stroke-width="1" stroke-dasharray="3.4 5.8" stroke-dashoffset="2"/>
<polyline points="860.8,587.7 902.8,611.7 940.6,589.8" fill="none" stroke="rgba(255,255,255,0.3)" stroke-width="1"/>
<path d="M954.8 581.6 L979.8 567.2" fill="none" stroke="#fff" stroke-opacity=".45" stroke-width="1" stroke-dasharray="4 4"/></g>
<rect x="64" y="113" width="24" height="24" fill="#7d8199"/>
<g transform="translate(64.0,113.0) scale(1.0)"><rect x="3" y="5" width="18" height="3.2" fill="#3c5a96"/><rect x="3" y="10.4" width="18" height="3.2" fill="#3c5a96"/><rect x="3" y="15.8" width="18" height="3.2" fill="#3c5a96"/></g>
<rect x="92" y="113" width="24" height="24" fill="#7d8199"/>
<g transform="translate(92.0,113.0) scale(1.0)"><rect x="6" y="6.5" width="12" height="11" fill="url(#gFrame)" stroke="#dfe6f4" stroke-width=".6"/><path d="M2.5 3 l3.8 0 l-3.8 3.8 Z" fill="#2fbf2f" stroke="#1f8f1f" stroke-width=".4"/><path d="M3.3 3.8 l3.2 3.2" stroke="#2fbf2f" stroke-width="1.5"/><path d="M21.5 3 l-3.8 0 l3.8 3.8 Z" fill="#2fbf2f" stroke="#1f8f1f" stroke-width=".4"/><path d="M20.7 3.8 l-3.2 3.2" stroke="#2fbf2f" stroke-width="1.5"/><path d="M2.5 21 l3.8 0 l-3.8 -3.8 Z" fill="#2fbf2f" stroke="#1f8f1f" stroke-width=".4"/><path d="M3.3 20.2 l3.2 -3.2" stroke="#2fbf2f" stroke-width="1.5"/><path d="M21.5 21 l-3.8 0 l3.8 -3.8 Z" fill="#2fbf2f" stroke="#1f8f1f" stroke-width=".4"/><path d="M20.7 20.2 l-3.2 -3.2" stroke="#2fbf2f" stroke-width="1.5"/></g>
<rect x="120" y="113" width="24" height="24" fill="#7d8199"/>
<g transform="translate(120.0,113.0) scale(1.0)"><path d="M18.45976 14.95976 L5.5 21" stroke="#c4c8d0" stroke-width="3.2" stroke-linecap="round"/><circle cx="14.5" cy="11" r="5.6" fill="#b8d4f0" stroke="#d8dee8" stroke-width="1.8"/><path d="M11.14 10.44 a3.36 3.36 0 0 1 2.8 -2.8" stroke="#fff" stroke-width="1.2" fill="none" opacity=".9"/><path d="M4 4.5 L10 8 M3.5 8 L9 10 M4 12 L8.6 12.2" stroke="#c8d0e0" stroke-width="1.1"/></g>
<rect x="148" y="113" width="24" height="24" fill="#7d8199"/>
<g transform="translate(148.0,113.0) scale(1.0)"><path d="M2 15.5 L13 9 L23 14 L12 21 Z" fill="none" stroke="#5e6478" stroke-width=".7"/><path d="M11 15 V7" stroke="#1e6ae0" stroke-width="2.4"/><path d="M11 2.5 l-3.2 5.2 h6.4 Z" fill="#1e6ae0"/><path d="M11 15 L16.5 11.2" stroke="#22b422" stroke-width="2"/><path d="M20.4 8.6 l-5.8 1 l3 4.2Z" fill="#22b422"/><path d="M11 15 L16.6 19.4" stroke="#e02020" stroke-width="2"/><path d="M20.4 22.4 l-5.8 -.8 l3.4 -4.2Z" fill="#e02020"/><circle cx="11" cy="15" r="2" fill="#eee" stroke="#777" stroke-width=".5"/></g>
<rect x="176" y="113" width="24" height="24" fill="#7d8199"/>
<g transform="translate(176.0,113.0) scale(1.0)"><path d="M12.2 3 V12.6 L3.4 16.8 M12.2 12.6 L21.2 16.8" fill="none" stroke="#0a0a0a" stroke-width="1.1"/><path d="M12.2 3 L21.6 7 L12.2 10.8 L3 7 Z" fill="url(#gGrn)"/><path d="M12.2 3 L21.6 7 L12.2 10.8 L3 7 Z M3 7 L3.4 16.8 L12.2 21.4 V10.8 M12.2 21.4 L21.2 16.8 L21.6 7" fill="none" stroke="#0a0a0a" stroke-width="1.2" stroke-linejoin="round"/></g>
<rect x="204" y="113" width="24" height="24" fill="#7d8199"/>
<g transform="translate(204.0,113.0) scale(1.0)"><path d="M3.4 16.8 L12.2 12.6 L21.2 16.8 L12.2 21.4 Z" fill="url(#gGrn)"/><path d="M12.2 3 V12.6 L3.4 16.8 M12.2 12.6 L21.2 16.8" fill="none" stroke="#0a0a0a" stroke-width="1.1"/><path d="M12.2 3 L21.6 7 L12.2 10.8 L3 7 Z M3 7 L3.4 16.8 L12.2 21.4 V10.8 M12.2 21.4 L21.2 16.8 L21.6 7" fill="none" stroke="#0a0a0a" stroke-width="1.2" stroke-linejoin="round"/></g>
<rect x="232" y="113" width="24" height="24" fill="#7d8199"/>
<g transform="translate(232.0,113.0) scale(1.0)"><path d="M3 7 L12.2 3 L12.2 12.6 L3.4 16.8 Z" fill="url(#gGrn)"/><path d="M12.2 3 V12.6 L3.4 16.8 M12.2 12.6 L21.2 16.8" fill="none" stroke="#0a0a0a" stroke-width="1.1"/><path d="M12.2 3 L21.6 7 L12.2 10.8 L3 7 Z M3 7 L3.4 16.8 L12.2 21.4 V10.8 M12.2 21.4 L21.2 16.8 L21.6 7" fill="none" stroke="#0a0a0a" stroke-width="1.2" stroke-linejoin="round"/></g>
<rect x="260" y="113" width="24" height="24" fill="#7d8199"/>
<g transform="translate(260.0,113.0) scale(1.0)"><path d="M12.2 3 V12.6 L3.4 16.8 M12.2 12.6 L21.2 16.8" fill="none" stroke="#0a0a0a" stroke-width="1.1"/><path d="M12.2 10.8 L21.6 7 L21.2 16.8 L12.2 21.4 Z" fill="url(#gGrn)"/><path d="M12.2 3 L21.6 7 L12.2 10.8 L3 7 Z M3 7 L3.4 16.8 L12.2 21.4 V10.8 M12.2 21.4 L21.2 16.8 L21.6 7" fill="none" stroke="#0a0a0a" stroke-width="1.2" stroke-linejoin="round"/></g>
<rect x="288" y="113" width="24" height="24" fill="#7d8199"/>
<g transform="translate(288.0,113.0) scale(1.0)"><path d="M12.2 3 V12.6 L3.4 16.8 M12.2 12.6 L21.2 16.8" fill="none" stroke="#0a0a0a" stroke-width="1.1"/><path d="M3 7 L12.2 10.8 L12.2 21.4 L3.4 16.8 Z" fill="url(#gGrn)"/><path d="M12.2 3 L21.6 7 L12.2 10.8 L3 7 Z M3 7 L3.4 16.8 L12.2 21.4 V10.8 M12.2 21.4 L21.2 16.8 L21.6 7" fill="none" stroke="#0a0a0a" stroke-width="1.2" stroke-linejoin="round"/></g>
<rect x="316" y="113" width="24" height="24" fill="#7d8199"/>
<g transform="translate(316.0,113.0) scale(1.0)"><path d="M12.2 3 L21.6 7 L21.2 16.8 L12.2 12.6 Z" fill="url(#gGrn)"/><path d="M12.2 3 V12.6 L3.4 16.8 M12.2 12.6 L21.2 16.8" fill="none" stroke="#0a0a0a" stroke-width="1.1"/><path d="M12.2 3 L21.6 7 L12.2 10.8 L3 7 Z M3 7 L3.4 16.8 L12.2 21.4 V10.8 M12.2 21.4 L21.2 16.8 L21.6 7" fill="none" stroke="#0a0a0a" stroke-width="1.2" stroke-linejoin="round"/></g>
<rect x="344" y="113" width="24" height="24" fill="#7d8199"/>
<g transform="translate(344.0,113.0) scale(1.0)"><path d="M12.2 3 L21.6 7 L12.2 10.8 L3 7 Z" fill="#62ea4c"/><path d="M3 7 L12.2 10.8 V21.4 L3.4 16.8 Z" fill="#34cc22"/><path d="M21.6 7 L12.2 10.8 V21.4 L21.2 16.8 Z" fill="#1f9c12"/></g>
<rect x="64" y="141" width="24" height="24" fill="#7d8199"/>
<g transform="translate(65.2,142.2) scale(0.9)"><path d="M6.5 5.2 V18.6 A5.5 2 0 0 0 17.5 18.6 V5.2 Z" fill="none" stroke="none"/><path d="M6.5 5.2 V18.6 A5.5 2 0 0 0 17.5 18.6 V5.2" fill="none" stroke="#1a1a1a" stroke-width="1"/><path d="M6.5 18.6 A5.5 2 0 0 1 17.5 18.6" fill="none" stroke="#1a1a1a" stroke-width="0.8" opacity=".55"/><ellipse cx="12" cy="5.2" rx="5.5" ry="2" fill="none" stroke="#1a1a1a" stroke-width="1"/></g>
<rect x="64" y="169" width="24" height="24" fill="#7d8199"/>
<g transform="translate(65.2,170.2) scale(0.9)"><path d="M6.5 5.2 V18.6 A5.5 2 0 0 0 17.5 18.6 V5.2 Z" fill="none" stroke="none"/><path d="M6.5 5.2 V18.6 A5.5 2 0 0 0 17.5 18.6 V5.2" fill="none" stroke="#1a1a1a" stroke-width="1"/><path d="M6.5 18.6 A5.5 2 0 0 1 17.5 18.6" fill="none" stroke="#1a1a1a" stroke-width="0.8" opacity=".55"/><ellipse cx="12" cy="5.2" rx="5.5" ry="2" fill="none" stroke="#1a1a1a" stroke-width="1"/></g>
<rect x="64.5" y="197.5" width="23" height="23" fill="#8f8963" stroke="#e8c862" stroke-width="1.4"/>
<g transform="translate(65.2,198.2) scale(0.9)"><ellipse cx="15" cy="20" rx="5" ry="1.4" fill="#555" opacity=".35"/><path d="M6.5 5.2 V18.6 A5.5 2 0 0 0 17.5 18.6 V5.2 Z" fill="url(#gCylL)" stroke="none"/><path d="M6.5 5.2 V18.6 A5.5 2 0 0 0 17.5 18.6 V5.2" fill="none" stroke="#2a3a6a" stroke-width="0.8"/><ellipse cx="12" cy="5.2" rx="5.5" ry="2" fill="#8ab6f6" stroke="#2a3a6a" stroke-width="0.8"/></g>
<rect x="64" y="225" width="24" height="24" fill="#7d8199"/>
<g transform="translate(65.2,226.2) scale(0.9)"><ellipse cx="15" cy="20" rx="5" ry="1.4" fill="#555" opacity=".35"/><path d="M6.5 5.2 V18.6 A5.5 2 0 0 0 17.5 18.6 V5.2 Z" fill="url(#gCylP)" stroke="none"/><path d="M6.5 5.2 V18.6 A5.5 2 0 0 0 17.5 18.6 V5.2" fill="none" stroke="#5a6680" stroke-width="0.9"/><ellipse cx="12" cy="5.2" rx="5.5" ry="2" fill="#e8effa" stroke="#5a6680" stroke-width="0.9"/></g>
<rect x="64" y="253" width="24" height="24" fill="#7d8199"/>
<g transform="translate(65.2,254.2) scale(0.9)"><path d="M6.5 5.2 V18.6 A5.5 2 0 0 0 17.5 18.6 V5.2 Z" fill="none" stroke="none"/><path d="M6.5 5.2 V18.6 A5.5 2 0 0 0 17.5 18.6 V5.2" fill="none" stroke="#222" stroke-width="0.9"/><path d="M6.5 18.6 A5.5 2 0 0 1 17.5 18.6" fill="none" stroke="#222" stroke-width="0.7200000000000001" opacity=".55"/><ellipse cx="12" cy="5.2" rx="5.5" ry="2" fill="none" stroke="#222" stroke-width="0.9"/><path d="M8.5 5.5 L10.5 20 M10.5 6.3 L8 19 M12 6.5 V21 M14 6.3 L16 19 M15.5 5.5 L13.5 20" stroke="#222" stroke-width=".7" fill="none"/></g>
<g><path d="M119.5 942 L119.5 921 L137.9 911 L137.9 950.2 Z" fill="rgba(200,205,225,0.38)" stroke="rgba(225,225,235,0.8)" stroke-width=".8"/><path d="M121 921.5 L137.9 931.6" stroke="rgba(230,230,235,0.8)" stroke-width=".8"/><path d="M119.5 942 L137.9 931.6 L155.4 942 L140.9 950.4 Z" fill="rgba(150,175,70,0.72)" stroke="none"/><path d="M137.9 931.6 L155.4 942 L140.9 950.4" fill="none" stroke="#f0f000" stroke-width="1"/><path d="M119.5 942 V889" stroke="#00a8b8" stroke-width="1.6"/><path d="M119.5 881 l-4 9.5 h8 Z" fill="#00d8e8"/><path d="M119.5 942 L150 924.6" stroke="#00b800" stroke-width="1.8"/><path d="M156 921.2 l-9.8 1.2 l4 6.6 Z" fill="#00c000"/><path d="M119.5 942 L139 952.8" stroke="#e00000" stroke-width="1.8"/><path d="M145.2 956.4 l-5.6 -6.6 l-4 6.8 Z" fill="#f00000"/><circle cx="119" cy="942" r="3.6" fill="url(#gSph)"/><text x="119.3" y="878" font-size="11.5" fill="#c8c8c8" text-anchor="middle">Z</text><text x="159.5" y="923" font-size="11.5" fill="#f01010" text-anchor="middle">Y</text><text x="149" y="964" font-size="11.5" fill="#c8c8c8" text-anchor="middle">X</text></g>
<g transform="translate(1180.9,1021.4) scale(0.8)"><rect x="3" y="3" width="18" height="18" fill="#c8ccd8" stroke="#5a6078" stroke-width="1.2"/><path d="M7.3 10.3 A5.0 5.0 0 0 1 16.3 9.5" stroke="#e06878" stroke-width="2.6" fill="none"/><path d="M19.1 7.9 L13.5 11.1 L17.8 12.0 Z" fill="#e06878"/><path d="M16.7 13.7 A5.0 5.0 0 0 1 7.7 14.5" stroke="#e89098" stroke-width="2.6" fill="none"/><path d="M4.9 16.1 L10.5 12.9 L6.2 12.0 Z" fill="#e89098"/></g>
<g transform="translate(1211.4,1021.4) scale(0.8)"><path d="M6 3 l2 4 l4.5 -1.5 l-2.5 4 l3.5 3 l-5 .5 l-1 4.5 l-2.5 -4 l-4 1 l2.5 -3.5 l-2.5 -3.5 l4 .5 Z" fill="#c848c8" stroke="#e8a020" stroke-width=".8"/><path d="M10 8 L20 14 L16 15.5 L19 20.5 L17 21.5 L14 16.5 L11 19.5 Z" fill="#e8d8f0" stroke="#6a5a8a" stroke-width=".8"/></g>
<g transform="translate(1243.4,1021.4) scale(0.8)"><path d="M4 11 L11 5 L18 11 V20 H4 Z" fill="#d8e4f8" stroke="#5a78b8" stroke-width=".8"/><path d="M9 6 L16 2.5 L22 5 L21 9 L14 10 Z" fill="#f0c890" stroke="#a87838" stroke-width=".6"/><rect x="6" y="13" width="4" height="4" fill="#3a72d8"/><rect x="12" y="13" width="4" height="7" fill="#6a9ae8"/></g>
<g transform="translate(1273.4,1021.4) scale(0.8)"><g transform="translate(12,10.5) scale(1.0)"><ellipse cx="0" cy="9.5" rx="5" ry="1.4" fill="#666" opacity=".35"/><path d="M-4.2 -4.5 Q-4 -8.6 0.2 -8.6 Q4.6 -8.6 4.6 -4.8 Q4.6 -2.4 2 -1 Q0.8 -.2 .8 2.2" fill="none" stroke="#3a72c8" stroke-width="2.6" stroke-linecap="round"/><circle cx=".8" cy="6.4" r="1.7" fill="#3a72c8"/></g></g>
<g transform="translate(1304.4,1021.4) scale(0.8)"><path d="M9 2.4000000000000004 l4.002 2.3 l-4.002 2.3 l-4.002 -2.3 Z" fill="#8ab8f8" stroke="#1a3a80" stroke-width="0.7"/><path d="M4.998 4.7 l4.002 2.3 v4.6 l-4.002 -2.3 Z" fill="#3a78e0" stroke="#1a3a80" stroke-width="0.7"/><path d="M13.001999999999999 4.7 l-4.002 2.3 v4.6 l4.002 -2.3 Z" fill="#2a58b0" stroke="#1a3a80" stroke-width="0.7"/><path d="M16 10.2 l4.176 2.4 l-4.176 2.4 l-4.176 -2.4 Z" fill="#9ab8c8" stroke="#223" stroke-width="0.7"/><path d="M11.824 12.6 l4.176 2.4 v4.8 l-4.176 -2.4 Z" fill="#5a8898" stroke="#223" stroke-width="0.7"/><path d="M20.176000000000002 12.6 l-4.176 2.4 v4.8 l4.176 -2.4 Z" fill="#3a5868" stroke="#223" stroke-width="0.7"/><path d="M1 15 H9" stroke="#e01818" stroke-width="2.2"/><path d="M11 15 l-4 -3 v6 Z" fill="#e01818"/><path d="M2 11 L6 14 M2 19 L6 16" stroke="#e01818" stroke-width="1.4"/></g>
<g transform="translate(1335.4,1021.4) scale(0.8)"><path d="M3.5 7 L12 3.5 L20.5 7 L12 10.5 Z" fill="#e828f0" stroke="#a018b0" stroke-width=".6"/><path d="M3.5 7 L12 10.5 V21.5 L3.5 17 Z" fill="#8ab0a0" stroke="#2a62d8" stroke-width="1.4"/><path d="M20.5 7 L12 10.5 V21.5 L20.5 17 Z" fill="#9ac0b0" stroke="#2a62d8" stroke-width="1.4"/></g>
<g transform="translate(1366.4,1021.4) scale(0.8)"><rect x="6" y="8" width="12" height="12" fill="#dfe6e0" stroke="#4a7a5a" stroke-width="1.2"/></g>
<g transform="translate(1427.4,1021.4) scale(0.8)"><rect x="4" y="3" width="16" height="18" fill="#d0d6e8" stroke="#5a6288" stroke-width="1.2"/><path d="M12 3 V21 M4 12 H20" stroke="#3a4a8a" stroke-width="1.6"/></g>
<circle cx="1468" cy="1009" r="3.6" fill="none" stroke="#3a72c8" stroke-width="1.2"/><path d="M1465.4 1011.8 L1461.6 1016" stroke="#3a72c8" stroke-width="1.6"/>
<circle cx="1901" cy="1010.2" r="6.2" fill="#050510"/><circle cx="1900.2" cy="1009.6" r="6" fill="#0a14e6"/><path d="M1896.2 1005.6 q3 -2.6 6.4 -1.4 q-1 3 -3.6 3.6 q-1.6 -.2 -2.8 -2.2 Z M1902.6 1010.6 q1.4 -3.4 3.2 -4.6 q1.4 3 .2 6.4 q-2 .8 -3.4 -1.8 Z M1894.6 1011.4 q2 -.6 3.8 .6 q.4 2.2 -1 3.2 q-2.2 -1.2 -2.8 -3.8 Z" fill="#14e014"/><path d="M1899 1013.6 h4.6 q-1.4 2 -3.6 2.2 Z" fill="#0808a0"/>
<g><ellipse cx="1406" cy="1038" rx="15" ry="2.6" fill="#b07048" opacity=".8"/><path d="M1405 975 q-1 -6 -5 -8" stroke="#8a4a1c" stroke-width="1.6" fill="none"/><ellipse cx="1400.6" cy="967.6" rx="3.2" ry="2" transform="rotate(35 1400.6 967.6)" fill="#8a4a1c"/><ellipse cx="1409.6" cy="969.4" rx="1.6" ry="3" transform="rotate(15 1409.6 969.4)" fill="#8a4a1c"/><circle cx="1389.6" cy="978" r="6.6" fill="#c88a44" stroke="#8a4a1c" stroke-width="1"/><circle cx="1423.2" cy="978" r="6.6" fill="#c88a44" stroke="#8a4a1c" stroke-width="1"/><circle cx="1389.2" cy="978" r="3.4" fill="#f4b8a0"/><circle cx="1423.6" cy="978" r="3.4" fill="#f4b8a0"/><path d="M1387 1030 q-3 -8 6 -12 h28 q7 4 5 9 q-4 1 -6 -2 l2 12 h-8 l-1 -4 l-2 4 h-8 l-2 -8 q-6 8 -14 1Z" fill="#fbf058" stroke="#a86a20" stroke-width=".8"/><ellipse cx="1406.5" cy="997.8" rx="26.8" ry="23" fill="#c88a44" stroke="#8a4a1c" stroke-width="1.2"/><ellipse cx="1405.8" cy="1003" rx="20.8" ry="17.2" fill="#fdf25a" stroke="#8a4a1c" stroke-width="1.2"/><circle cx="1395.6" cy="993.8" r="1.6" fill="#5a2a0c"/><circle cx="1416.4" cy="993.6" r="1.6" fill="#5a2a0c"/><ellipse cx="1406.4" cy="997.6" rx="1.4" ry=".8" fill="#8a4a1c"/><ellipse cx="1390" cy="1000" rx="3.4" ry="2.4" fill="#f8a820"/><ellipse cx="1421" cy="1000" rx="3.4" ry="2.4" fill="#f8a820"/><path d="M1392 1018.6 q14 5 28 0" fill="none" stroke="#a86a20" stroke-width="2.4"/><path d="M1418 1019 L1400 1033" stroke="#a86a38" stroke-width="1.4"/><circle cx="1391" cy="1023.5" r="2.4" fill="#c88a44"/><circle cx="1401.5" cy="1023.5" r="2.4" fill="#c88a44"/><ellipse cx="1396" cy="1029.5" rx="7.6" ry="6.6" fill="#c88a44" stroke="#8a4a1c" stroke-width=".8"/><circle cx="1392" cy="1030.8" r="1.3" fill="#f890b8"/><circle cx="1400" cy="1030.8" r="1.3" fill="#f890b8"/><circle cx="1367.4" cy="1005.6" r="8.4" fill="#8e5a4a"/><text x="1367.4" y="1010.6" font-size="13" fill="#fff" text-anchor="middle">A</text><circle cx="1374.6" cy="1026.6" r="8.4" fill="#8e5a4a"/><path d="M1371 1021.6 l-3.4 2.6 l1.6 2.2 l1.6 -.9 v6 h7.6 v-6 l1.6 .9 l1.6 -2.2 l-3.4 -2.6 q-1.9 1.6 -3.6 0 Z" fill="#fff"/><g transform="translate(1445.6,989.4) rotate(-7) scale(.88,1)"><text x="0" y="0" font-size="24" font-weight="bold" text-anchor="middle" fill="#b07c50" stroke="#b07c50" stroke-width="5.4" stroke-linejoin="round">W</text><text x="0" y="0" font-size="24" font-weight="bold" text-anchor="middle" fill="#fff" stroke="#fff" stroke-width="2.6" stroke-linejoin="round">W</text></g><circle cx="1439.6" cy="980" r="1.3" fill="#d8a070"/><circle cx="1449" cy="984" r="1.3" fill="#d8a070"/><circle cx="1444" cy="976.5" r="1.2" fill="#d8a070"/><circle cx="1452.6" cy="977" r="1.2" fill="#d8a070"/><circle cx="1438.4" cy="993.6" r="3.6" fill="#c8905c"/><circle cx="1454" cy="993.6" r="3.6" fill="#c8905c"/><circle cx="1438.4" cy="993.8" r="1.6" fill="#f0b8a0"/><circle cx="1454" cy="993.8" r="1.6" fill="#f0b8a0"/><g transform="translate(1446.2,1011) rotate(0) scale(1,1)"><text x="0" y="0" font-size="23" font-weight="bold" text-anchor="middle" fill="#b07c50" stroke="#b07c50" stroke-width="5.4" stroke-linejoin="round">O</text><text x="0" y="0" font-size="23" font-weight="bold" text-anchor="middle" fill="#c8905c" stroke="#c8905c" stroke-width="2.6" stroke-linejoin="round">O</text></g><g transform="translate(1447.4,1031.4) rotate(-9) scale(.88,1)"><text x="0" y="0" font-size="24" font-weight="bold" text-anchor="middle" fill="#c8a030" stroke="#c8a030" stroke-width="5.4" stroke-linejoin="round">W</text><text x="0" y="0" font-size="24" font-weight="bold" text-anchor="middle" fill="#fdf25a" stroke="#fdf25a" stroke-width="2.6" stroke-linejoin="round">W</text></g></g>
</svg></body></html>
